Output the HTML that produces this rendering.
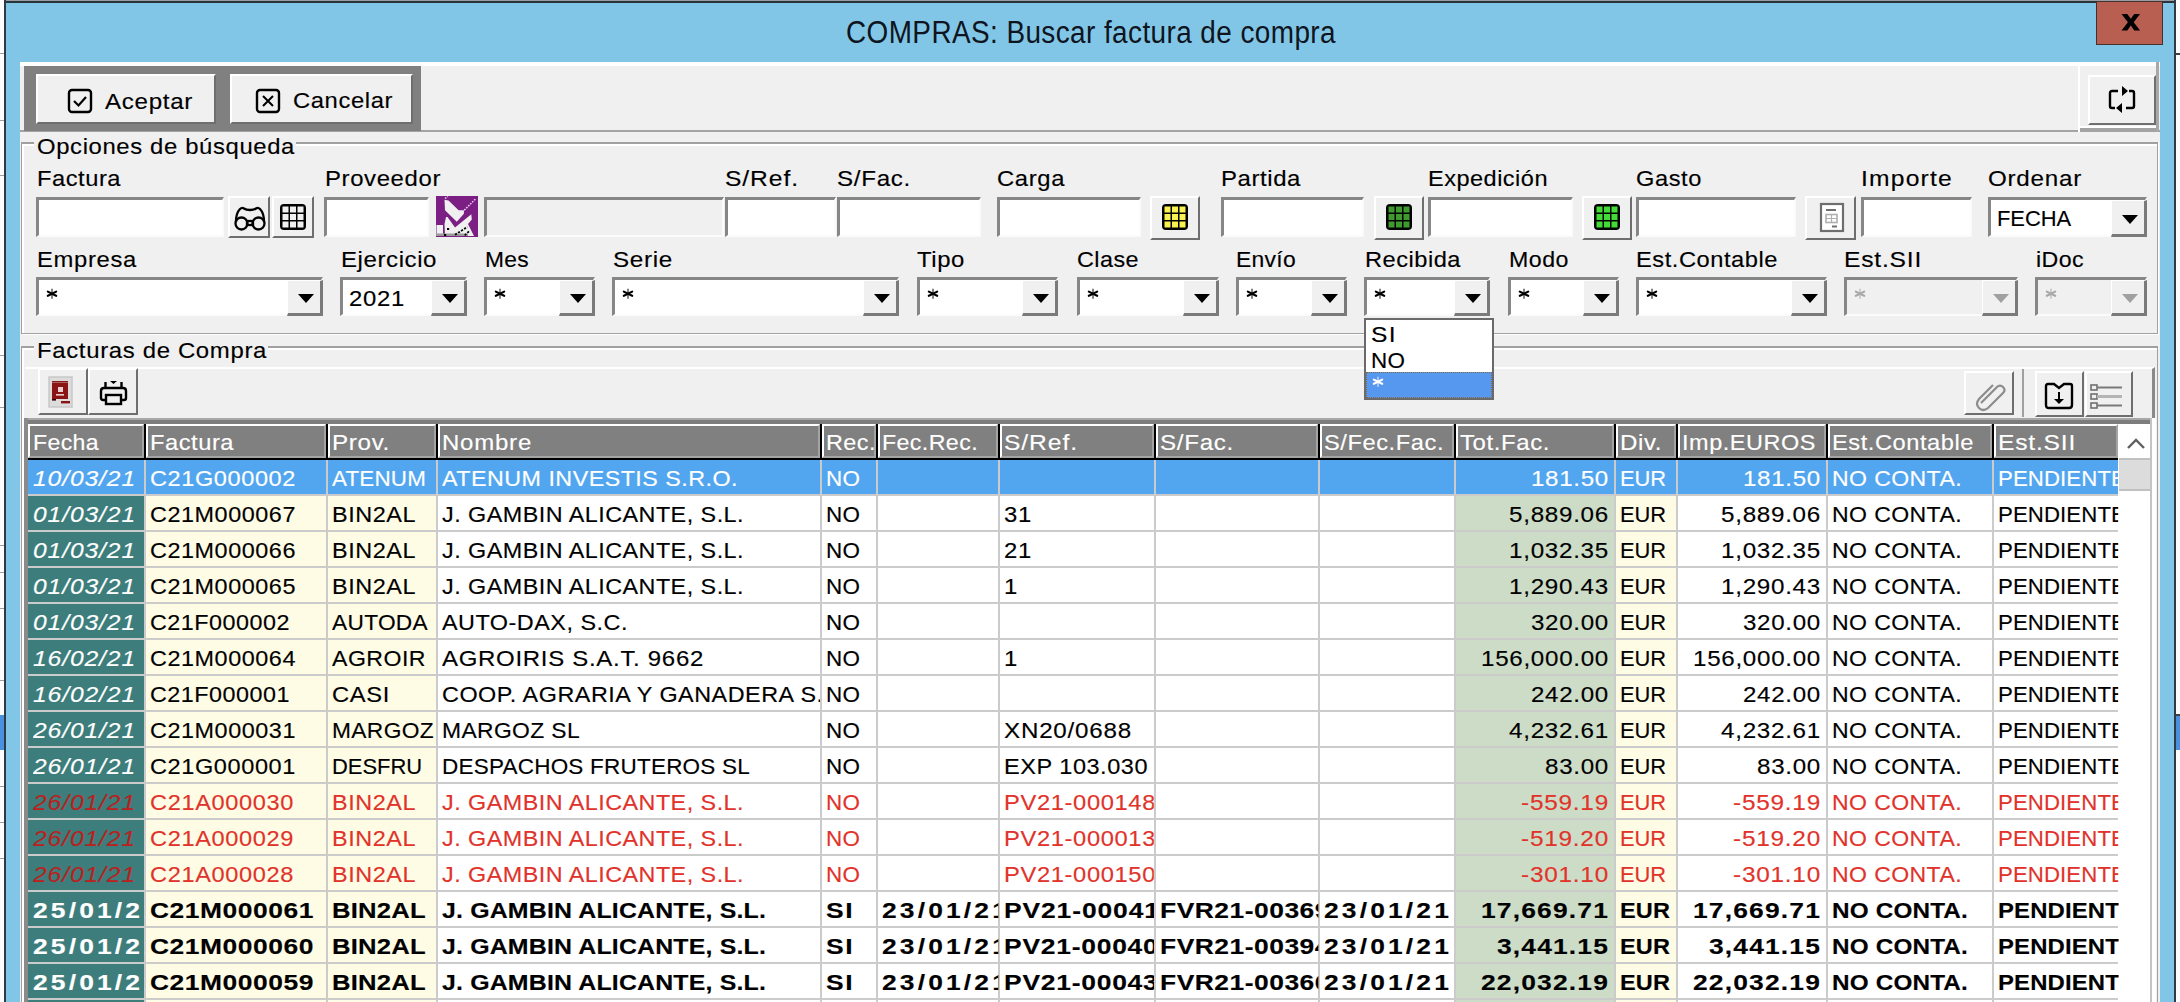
<!DOCTYPE html><html><head><meta charset="utf-8"><style>*{margin:0;padding:0}
html,body{width:2180px;height:1002px;overflow:hidden;background:#f0f0f0}
body{position:relative;font-family:"Liberation Sans",sans-serif}
body>div,body>svg{position:absolute}
.t{white-space:pre;-webkit-text-stroke:0.15px currentColor}
</style></head><body>
<div style="left:0px;top:0px;width:4px;height:1002px;background:#fdfdfd"></div>
<div style="left:2176px;top:0px;width:4px;height:1002px;background:#fdfdfd"></div>
<div style="left:0px;top:53px;width:4px;height:1px;background:#a0a0a0"></div>
<div style="left:0px;top:120px;width:4px;height:1px;background:#a0a0a0"></div>
<div style="left:0px;top:175px;width:4px;height:1px;background:#a0a0a0"></div>
<div style="left:0px;top:355px;width:4px;height:1px;background:#a0a0a0"></div>
<div style="left:0px;top:407px;width:4px;height:1px;background:#a0a0a0"></div>
<div style="left:0px;top:545px;width:4px;height:1px;background:#a0a0a0"></div>
<div style="left:0px;top:572px;width:4px;height:1px;background:#a0a0a0"></div>
<div style="left:0px;top:608px;width:4px;height:1px;background:#a0a0a0"></div>
<div style="left:0px;top:680px;width:4px;height:1px;background:#a0a0a0"></div>
<div style="left:0px;top:786px;width:4px;height:1px;background:#a0a0a0"></div>
<div style="left:0px;top:822px;width:4px;height:1px;background:#a0a0a0"></div>
<div style="left:0px;top:858px;width:4px;height:1px;background:#a0a0a0"></div>
<div style="left:0px;top:715px;width:4px;height:35px;background:#4a90e0"></div>
<div style="left:2176px;top:53px;width:4px;height:2px;background:#404040"></div>
<div style="left:2176px;top:714px;width:4px;height:2px;background:#404040"></div>
<div style="left:2176px;top:716px;width:4px;height:34px;background:#4a90e0"></div>
<div style="left:4px;top:0px;width:2172px;height:1002px;background:#81c6e6"></div>
<div style="left:4px;top:0px;width:2172px;height:1px;background:#9a9ea4"></div>
<div style="left:4px;top:1px;width:2172px;height:2px;background:#27343c"></div>
<div style="left:4px;top:0px;width:2px;height:1002px;background:#2f3b44"></div>
<div style="left:2174px;top:0px;width:2px;height:1002px;background:#2f3b44"></div>
<div style="left:2096px;top:1px;width:67px;height:44px;background:#b95f52;border:1px solid #45302c;box-sizing:border-box"></div>
<svg style="left:2121px;top:14px" width="20" height="17" viewBox="0 0 20 17"><polygon points="0.5,0 6.3,0 9.8,4.8 13.3,0 19.1,0 12.7,8.2 19.1,16.5 13.3,16.5 9.8,11.6 6.3,16.5 0.5,16.5 6.9,8.2" fill="#000"/></svg>
<div class="t" style="left:846.0px;top:17px;font-size:31px;line-height:31px;letter-spacing:0.470px;color:#0e1420;transform:scaleX(0.9000);transform-origin:0 0;-webkit-text-stroke:0;">COMPRAS: Buscar factura de compra</div>
<div style="left:20px;top:62px;width:2140px;height:940px;background:#f0f0f0"></div>
<div style="left:20px;top:62px;width:2140px;height:4px;background:#fff"></div>
<div style="left:2080px;top:126px;width:76px;height:2px;background:#fff"></div>
<div style="left:20px;top:130px;width:2140px;height:2px;background:#a3a3a3"></div>
<div style="left:2078px;top:128px;width:78px;height:2px;background:#a3a3a3"></div>
<div style="left:2156px;top:62px;width:3px;height:70px;background:#a8a8a8"></div>
<div style="left:24px;top:66px;width:397px;height:65px;background:#808080"></div>
<div style="left:36px;top:74px;width:180px;height:50px;background:#f0f0f0;border-top:2px solid #fff;border-left:2px solid #fff;border-bottom:2px solid #6e6e6e;border-right:2px solid #6e6e6e;box-sizing:border-box"></div>
<div style="left:230px;top:74px;width:183px;height:50px;background:#f0f0f0;border-top:2px solid #fff;border-left:2px solid #fff;border-bottom:2px solid #6e6e6e;border-right:2px solid #6e6e6e;box-sizing:border-box"></div>
<svg style="left:67px;top:88px" width="26" height="26" viewBox="0 0 26 26"><rect x="2" y="2" width="22" height="22" rx="3" fill="none" stroke="#000" stroke-width="2.4"/><path d="M7 13 L11.5 17.5 L19 9" fill="none" stroke="#000" stroke-width="2.2"/></svg>
<div class="t" style="left:105.0px;top:91px;font-size:22px;line-height:22px;letter-spacing:0.634px;color:#000;transform:scaleX(1.0963);transform-origin:0 0;">Aceptar</div>
<svg style="left:255px;top:88px" width="26" height="26" viewBox="0 0 26 26"><rect x="2" y="2" width="22" height="22" rx="3" fill="none" stroke="#000" stroke-width="2.4"/><path d="M8 8 L18 18 M18 8 L8 18" fill="none" stroke="#000" stroke-width="2"/></svg>
<div class="t" style="left:293.0px;top:90px;font-size:22px;line-height:22px;letter-spacing:0.553px;color:#000;transform:scaleX(1.0815);transform-origin:0 0;">Cancelar</div>
<div style="left:2078px;top:62px;width:2px;height:70px;background:#fff"></div>
<div style="left:2088px;top:75px;width:68px;height:50px;background:#f0f0f0;border-top:2px solid #fff;border-left:2px solid #fff;border-bottom:2px solid #6e6e6e;border-right:2px solid #6e6e6e;box-sizing:border-box"></div>
<svg style="left:2106px;top:85px" width="32" height="30" viewBox="0 0 32 30"><path d="M12 6 H6 Q4 6 4 8 V21 Q4 23 6 23 H9 M20 23 H26 Q28 23 28 21 V8 Q28 6 26 6 H23" fill="none" stroke="#000" stroke-width="2.4"/><path d="M16 1 L22 6 L16 11 Z M16 18 L10 23 L16 28 Z" fill="#000"/></svg>
<div style="left:21px;top:142px;width:2137px;height:192px;border-top:2px solid #a0a0a0;border-left:1px solid #a0a0a0;border-bottom:1px solid #a0a0a0;border-right:1px solid #a0a0a0;box-shadow:inset 2px 2px 0 #fff, 1px 1px 0 #fff;box-sizing:border-box"></div>
<div style="left:34px;top:136px;width:262px;height:14px;background:#f0f0f0"></div>
<div class="t" style="left:37.0px;top:136px;font-size:22px;line-height:22px;letter-spacing:0.585px;color:#000;transform:scaleX(1.0841);transform-origin:0 0;">Opciones de búsqueda</div>
<div class="t" style="left:37.0px;top:168px;font-size:22px;line-height:22px;letter-spacing:0.500px;color:#000;transform:scaleX(1.0757);transform-origin:0 0;">Factura</div>
<div class="t" style="left:325.0px;top:168px;font-size:22px;line-height:22px;letter-spacing:0.593px;color:#000;transform:scaleX(1.0856);transform-origin:0 0;">Proveedor</div>
<div class="t" style="left:725.0px;top:168px;font-size:22px;line-height:22px;letter-spacing:0.822px;color:#000;transform:scaleX(1.1200);transform-origin:0 0;">S/Ref.</div>
<div class="t" style="left:837.0px;top:168px;font-size:22px;line-height:22px;letter-spacing:0.633px;color:#000;transform:scaleX(1.0984);transform-origin:0 0;">S/Fac.</div>
<div class="t" style="left:997.0px;top:168px;font-size:22px;line-height:22px;letter-spacing:0.598px;color:#000;transform:scaleX(1.0809);transform-origin:0 0;">Carga</div>
<div class="t" style="left:1221.0px;top:168px;font-size:22px;line-height:22px;letter-spacing:0.540px;color:#000;transform:scaleX(1.0885);transform-origin:0 0;">Partida</div>
<div class="t" style="left:1428.0px;top:168px;font-size:22px;line-height:22px;letter-spacing:0.463px;color:#000;transform:scaleX(1.0689);transform-origin:0 0;">Expedición</div>
<div class="t" style="left:1636.0px;top:168px;font-size:22px;line-height:22px;letter-spacing:0.543px;color:#000;transform:scaleX(1.0746);transform-origin:0 0;">Gasto</div>
<div class="t" style="left:1861.0px;top:168px;font-size:22px;line-height:22px;letter-spacing:1.078px;color:#000;transform:scaleX(1.1200);transform-origin:0 0;">Importe</div>
<div class="t" style="left:1988.0px;top:168px;font-size:22px;line-height:22px;letter-spacing:0.691px;color:#000;transform:scaleX(1.0987);transform-origin:0 0;">Ordenar</div>
<div style="left:36px;top:197px;width:188px;height:40px;background:#fff;border-top:3px solid #868686;border-left:3px solid #868686;border-bottom:2px solid #fbfbfb;border-right:2px solid #fbfbfb;box-sizing:border-box"></div>
<div style="left:228px;top:196px;width:42px;height:42px;background:#f0f0f0;border-top:2px solid #fff;border-left:2px solid #fff;border-bottom:2px solid #6e6e6e;border-right:2px solid #6e6e6e;box-sizing:border-box"></div>
<div style="left:272px;top:196px;width:42px;height:42px;background:#f0f0f0;border-top:2px solid #fff;border-left:2px solid #fff;border-bottom:2px solid #6e6e6e;border-right:2px solid #6e6e6e;box-sizing:border-box"></div>
<div style="left:324px;top:197px;width:105px;height:40px;background:#fff;border-top:3px solid #868686;border-left:3px solid #868686;border-bottom:2px solid #fbfbfb;border-right:2px solid #fbfbfb;box-sizing:border-box"></div>
<div style="left:436px;top:196px;width:42px;height:41px;background:#7b1f85"></div>
<div style="left:484px;top:197px;width:240px;height:40px;background:#f0f0f0;border-top:3px solid #868686;border-left:3px solid #868686;border-bottom:2px solid #fbfbfb;border-right:2px solid #fbfbfb;box-sizing:border-box"></div>
<div style="left:725px;top:197px;width:111px;height:40px;background:#fff;border-top:3px solid #868686;border-left:3px solid #868686;border-bottom:2px solid #fbfbfb;border-right:2px solid #fbfbfb;box-sizing:border-box"></div>
<div style="left:837px;top:197px;width:144px;height:40px;background:#fff;border-top:3px solid #868686;border-left:3px solid #868686;border-bottom:2px solid #fbfbfb;border-right:2px solid #fbfbfb;box-sizing:border-box"></div>
<div style="left:997px;top:197px;width:144px;height:40px;background:#fff;border-top:3px solid #868686;border-left:3px solid #868686;border-bottom:2px solid #fbfbfb;border-right:2px solid #fbfbfb;box-sizing:border-box"></div>
<div style="left:1150px;top:196px;width:50px;height:44px;background:#f0f0f0;border-top:2px solid #fff;border-left:2px solid #fff;border-bottom:2px solid #6e6e6e;border-right:2px solid #6e6e6e;box-sizing:border-box"></div>
<div style="left:1221px;top:197px;width:143px;height:40px;background:#fff;border-top:3px solid #868686;border-left:3px solid #868686;border-bottom:2px solid #fbfbfb;border-right:2px solid #fbfbfb;box-sizing:border-box"></div>
<div style="left:1374px;top:196px;width:50px;height:44px;background:#f0f0f0;border-top:2px solid #fff;border-left:2px solid #fff;border-bottom:2px solid #6e6e6e;border-right:2px solid #6e6e6e;box-sizing:border-box"></div>
<div style="left:1428px;top:197px;width:145px;height:40px;background:#fff;border-top:3px solid #868686;border-left:3px solid #868686;border-bottom:2px solid #fbfbfb;border-right:2px solid #fbfbfb;box-sizing:border-box"></div>
<div style="left:1582px;top:196px;width:50px;height:44px;background:#f0f0f0;border-top:2px solid #fff;border-left:2px solid #fff;border-bottom:2px solid #6e6e6e;border-right:2px solid #6e6e6e;box-sizing:border-box"></div>
<div style="left:1636px;top:197px;width:160px;height:40px;background:#fff;border-top:3px solid #868686;border-left:3px solid #868686;border-bottom:2px solid #fbfbfb;border-right:2px solid #fbfbfb;box-sizing:border-box"></div>
<div style="left:1805px;top:196px;width:51px;height:44px;background:#f0f0f0;border-top:2px solid #fff;border-left:2px solid #fff;border-bottom:2px solid #6e6e6e;border-right:2px solid #6e6e6e;box-sizing:border-box"></div>
<div style="left:1861px;top:197px;width:111px;height:40px;background:#fff;border-top:3px solid #868686;border-left:3px solid #868686;border-bottom:2px solid #fbfbfb;border-right:2px solid #fbfbfb;box-sizing:border-box"></div>
<div style="left:1988px;top:197px;width:159px;height:40px;background:#fff;border-top:3px solid #868686;border-left:3px solid #868686;border-bottom:2px solid #fbfbfb;border-right:2px solid #fbfbfb;box-sizing:border-box"></div>
<div style="left:2111px;top:200px;width:36px;height:37px;background:#f0f0f0;border-bottom:3px solid #7a7a7a;border-right:3px solid #7a7a7a;border-top:1px solid #fff;border-left:1px solid #fff;box-sizing:border-box"></div>
<div style="left:2122px;top:215px;width:0;height:0;border-left:8px solid transparent;border-right:8px solid transparent;border-top:9px solid #000"></div>
<div class="t" style="left:1997.0px;top:208px;font-size:22px;line-height:22px;letter-spacing:-0.045px;color:#000;transform:scaleX(0.9955);transform-origin:0 0;">FECHA</div>
<div class="t" style="left:37.0px;top:249px;font-size:22px;line-height:22px;letter-spacing:0.632px;color:#000;transform:scaleX(1.0815);transform-origin:0 0;">Empresa</div>
<div class="t" style="left:341.0px;top:249px;font-size:22px;line-height:22px;letter-spacing:0.523px;color:#000;transform:scaleX(1.0928);transform-origin:0 0;">Ejercicio</div>
<div class="t" style="left:485.0px;top:249px;font-size:22px;line-height:22px;letter-spacing:0.314px;color:#000;transform:scaleX(1.0352);transform-origin:0 0;">Mes</div>
<div class="t" style="left:613.0px;top:249px;font-size:22px;line-height:22px;letter-spacing:0.628px;color:#000;transform:scaleX(1.1009);transform-origin:0 0;">Serie</div>
<div class="t" style="left:917.0px;top:249px;font-size:22px;line-height:22px;letter-spacing:0.554px;color:#000;transform:scaleX(1.0860);transform-origin:0 0;">Tipo</div>
<div class="t" style="left:1077.0px;top:249px;font-size:22px;line-height:22px;letter-spacing:0.433px;color:#000;transform:scaleX(1.0613);transform-origin:0 0;">Clase</div>
<div class="t" style="left:1236.0px;top:249px;font-size:22px;line-height:22px;letter-spacing:0.287px;color:#000;transform:scaleX(1.0398);transform-origin:0 0;">Envío</div>
<div class="t" style="left:1365.0px;top:249px;font-size:22px;line-height:22px;letter-spacing:0.484px;color:#000;transform:scaleX(1.0728);transform-origin:0 0;">Recibida</div>
<div class="t" style="left:1509.0px;top:249px;font-size:22px;line-height:22px;letter-spacing:0.470px;color:#000;transform:scaleX(1.0540);transform-origin:0 0;">Modo</div>
<div class="t" style="left:1636.0px;top:249px;font-size:22px;line-height:22px;letter-spacing:0.496px;color:#000;transform:scaleX(1.0764);transform-origin:0 0;">Est.Contable</div>
<div class="t" style="left:1844.0px;top:249px;font-size:22px;line-height:22px;letter-spacing:0.692px;color:#000;transform:scaleX(1.1200);transform-origin:0 0;">Est.SII</div>
<div class="t" style="left:2036.0px;top:249px;font-size:22px;line-height:22px;letter-spacing:0.378px;color:#000;transform:scaleX(1.0543);transform-origin:0 0;">iDoc</div>
<div style="left:36px;top:277px;width:287px;height:39px;background:#fff;border-top:3px solid #868686;border-left:3px solid #868686;border-bottom:2px solid #fbfbfb;border-right:2px solid #fbfbfb;box-sizing:border-box"></div>
<div style="left:287px;top:280px;width:36px;height:36px;background:#f0f0f0;border-bottom:3px solid #7a7a7a;border-right:3px solid #7a7a7a;border-top:1px solid #fff;border-left:1px solid #fff;box-sizing:border-box"></div>
<div style="left:298px;top:294px;width:0;height:0;border-left:8px solid transparent;border-right:8px solid transparent;border-top:9px solid #000"></div>
<svg style="left:46px;top:288px" width="12" height="12" viewBox="0 0 12 12"><path d="M6 0.8 V10.8" stroke="#000" stroke-width="1.6" opacity="0.6"/><path d="M1.8 3.6 L6 5.8 L10.2 3.6 M1.8 7.8 L6 5.8 L10.2 7.8" fill="none" stroke="#000" stroke-width="2.1" stroke-linecap="round"/></svg>
<div style="left:340px;top:277px;width:127px;height:39px;background:#fff;border-top:3px solid #868686;border-left:3px solid #868686;border-bottom:2px solid #fbfbfb;border-right:2px solid #fbfbfb;box-sizing:border-box"></div>
<div style="left:431px;top:280px;width:36px;height:36px;background:#f0f0f0;border-bottom:3px solid #7a7a7a;border-right:3px solid #7a7a7a;border-top:1px solid #fff;border-left:1px solid #fff;box-sizing:border-box"></div>
<div style="left:442px;top:294px;width:0;height:0;border-left:8px solid transparent;border-right:8px solid transparent;border-top:9px solid #000"></div>
<div class="t" style="left:349.0px;top:288px;font-size:22px;line-height:22px;letter-spacing:0.649px;color:#000;transform:scaleX(1.0864);transform-origin:0 0;">2021</div>
<div style="left:484px;top:277px;width:111px;height:39px;background:#fff;border-top:3px solid #868686;border-left:3px solid #868686;border-bottom:2px solid #fbfbfb;border-right:2px solid #fbfbfb;box-sizing:border-box"></div>
<div style="left:559px;top:280px;width:36px;height:36px;background:#f0f0f0;border-bottom:3px solid #7a7a7a;border-right:3px solid #7a7a7a;border-top:1px solid #fff;border-left:1px solid #fff;box-sizing:border-box"></div>
<div style="left:570px;top:294px;width:0;height:0;border-left:8px solid transparent;border-right:8px solid transparent;border-top:9px solid #000"></div>
<svg style="left:494px;top:288px" width="12" height="12" viewBox="0 0 12 12"><path d="M6 0.8 V10.8" stroke="#000" stroke-width="1.6" opacity="0.6"/><path d="M1.8 3.6 L6 5.8 L10.2 3.6 M1.8 7.8 L6 5.8 L10.2 7.8" fill="none" stroke="#000" stroke-width="2.1" stroke-linecap="round"/></svg>
<div style="left:612px;top:277px;width:287px;height:39px;background:#fff;border-top:3px solid #868686;border-left:3px solid #868686;border-bottom:2px solid #fbfbfb;border-right:2px solid #fbfbfb;box-sizing:border-box"></div>
<div style="left:863px;top:280px;width:36px;height:36px;background:#f0f0f0;border-bottom:3px solid #7a7a7a;border-right:3px solid #7a7a7a;border-top:1px solid #fff;border-left:1px solid #fff;box-sizing:border-box"></div>
<div style="left:874px;top:294px;width:0;height:0;border-left:8px solid transparent;border-right:8px solid transparent;border-top:9px solid #000"></div>
<svg style="left:622px;top:288px" width="12" height="12" viewBox="0 0 12 12"><path d="M6 0.8 V10.8" stroke="#000" stroke-width="1.6" opacity="0.6"/><path d="M1.8 3.6 L6 5.8 L10.2 3.6 M1.8 7.8 L6 5.8 L10.2 7.8" fill="none" stroke="#000" stroke-width="2.1" stroke-linecap="round"/></svg>
<div style="left:917px;top:277px;width:141px;height:39px;background:#fff;border-top:3px solid #868686;border-left:3px solid #868686;border-bottom:2px solid #fbfbfb;border-right:2px solid #fbfbfb;box-sizing:border-box"></div>
<div style="left:1022px;top:280px;width:36px;height:36px;background:#f0f0f0;border-bottom:3px solid #7a7a7a;border-right:3px solid #7a7a7a;border-top:1px solid #fff;border-left:1px solid #fff;box-sizing:border-box"></div>
<div style="left:1033px;top:294px;width:0;height:0;border-left:8px solid transparent;border-right:8px solid transparent;border-top:9px solid #000"></div>
<svg style="left:927px;top:288px" width="12" height="12" viewBox="0 0 12 12"><path d="M6 0.8 V10.8" stroke="#000" stroke-width="1.6" opacity="0.6"/><path d="M1.8 3.6 L6 5.8 L10.2 3.6 M1.8 7.8 L6 5.8 L10.2 7.8" fill="none" stroke="#000" stroke-width="2.1" stroke-linecap="round"/></svg>
<div style="left:1077px;top:277px;width:142px;height:39px;background:#fff;border-top:3px solid #868686;border-left:3px solid #868686;border-bottom:2px solid #fbfbfb;border-right:2px solid #fbfbfb;box-sizing:border-box"></div>
<div style="left:1183px;top:280px;width:36px;height:36px;background:#f0f0f0;border-bottom:3px solid #7a7a7a;border-right:3px solid #7a7a7a;border-top:1px solid #fff;border-left:1px solid #fff;box-sizing:border-box"></div>
<div style="left:1194px;top:294px;width:0;height:0;border-left:8px solid transparent;border-right:8px solid transparent;border-top:9px solid #000"></div>
<svg style="left:1087px;top:288px" width="12" height="12" viewBox="0 0 12 12"><path d="M6 0.8 V10.8" stroke="#000" stroke-width="1.6" opacity="0.6"/><path d="M1.8 3.6 L6 5.8 L10.2 3.6 M1.8 7.8 L6 5.8 L10.2 7.8" fill="none" stroke="#000" stroke-width="2.1" stroke-linecap="round"/></svg>
<div style="left:1236px;top:277px;width:111px;height:39px;background:#fff;border-top:3px solid #868686;border-left:3px solid #868686;border-bottom:2px solid #fbfbfb;border-right:2px solid #fbfbfb;box-sizing:border-box"></div>
<div style="left:1311px;top:280px;width:36px;height:36px;background:#f0f0f0;border-bottom:3px solid #7a7a7a;border-right:3px solid #7a7a7a;border-top:1px solid #fff;border-left:1px solid #fff;box-sizing:border-box"></div>
<div style="left:1322px;top:294px;width:0;height:0;border-left:8px solid transparent;border-right:8px solid transparent;border-top:9px solid #000"></div>
<svg style="left:1246px;top:288px" width="12" height="12" viewBox="0 0 12 12"><path d="M6 0.8 V10.8" stroke="#000" stroke-width="1.6" opacity="0.6"/><path d="M1.8 3.6 L6 5.8 L10.2 3.6 M1.8 7.8 L6 5.8 L10.2 7.8" fill="none" stroke="#000" stroke-width="2.1" stroke-linecap="round"/></svg>
<div style="left:1364px;top:277px;width:126px;height:39px;background:#fff;border-top:3px solid #868686;border-left:3px solid #868686;border-bottom:2px solid #fbfbfb;border-right:2px solid #fbfbfb;box-sizing:border-box"></div>
<div style="left:1454px;top:280px;width:36px;height:36px;background:#f0f0f0;border-bottom:3px solid #7a7a7a;border-right:3px solid #7a7a7a;border-top:1px solid #fff;border-left:1px solid #fff;box-sizing:border-box"></div>
<div style="left:1465px;top:294px;width:0;height:0;border-left:8px solid transparent;border-right:8px solid transparent;border-top:9px solid #000"></div>
<svg style="left:1374px;top:288px" width="12" height="12" viewBox="0 0 12 12"><path d="M6 0.8 V10.8" stroke="#000" stroke-width="1.6" opacity="0.6"/><path d="M1.8 3.6 L6 5.8 L10.2 3.6 M1.8 7.8 L6 5.8 L10.2 7.8" fill="none" stroke="#000" stroke-width="2.1" stroke-linecap="round"/></svg>
<div style="left:1508px;top:277px;width:111px;height:39px;background:#fff;border-top:3px solid #868686;border-left:3px solid #868686;border-bottom:2px solid #fbfbfb;border-right:2px solid #fbfbfb;box-sizing:border-box"></div>
<div style="left:1583px;top:280px;width:36px;height:36px;background:#f0f0f0;border-bottom:3px solid #7a7a7a;border-right:3px solid #7a7a7a;border-top:1px solid #fff;border-left:1px solid #fff;box-sizing:border-box"></div>
<div style="left:1594px;top:294px;width:0;height:0;border-left:8px solid transparent;border-right:8px solid transparent;border-top:9px solid #000"></div>
<svg style="left:1518px;top:288px" width="12" height="12" viewBox="0 0 12 12"><path d="M6 0.8 V10.8" stroke="#000" stroke-width="1.6" opacity="0.6"/><path d="M1.8 3.6 L6 5.8 L10.2 3.6 M1.8 7.8 L6 5.8 L10.2 7.8" fill="none" stroke="#000" stroke-width="2.1" stroke-linecap="round"/></svg>
<div style="left:1636px;top:277px;width:191px;height:39px;background:#fff;border-top:3px solid #868686;border-left:3px solid #868686;border-bottom:2px solid #fbfbfb;border-right:2px solid #fbfbfb;box-sizing:border-box"></div>
<div style="left:1791px;top:280px;width:36px;height:36px;background:#f0f0f0;border-bottom:3px solid #7a7a7a;border-right:3px solid #7a7a7a;border-top:1px solid #fff;border-left:1px solid #fff;box-sizing:border-box"></div>
<div style="left:1802px;top:294px;width:0;height:0;border-left:8px solid transparent;border-right:8px solid transparent;border-top:9px solid #000"></div>
<svg style="left:1646px;top:288px" width="12" height="12" viewBox="0 0 12 12"><path d="M6 0.8 V10.8" stroke="#000" stroke-width="1.6" opacity="0.6"/><path d="M1.8 3.6 L6 5.8 L10.2 3.6 M1.8 7.8 L6 5.8 L10.2 7.8" fill="none" stroke="#000" stroke-width="2.1" stroke-linecap="round"/></svg>
<div style="left:1844px;top:277px;width:174px;height:39px;background:#f0f0f0;border-top:3px solid #868686;border-left:3px solid #868686;border-bottom:2px solid #fbfbfb;border-right:2px solid #fbfbfb;box-sizing:border-box"></div>
<div style="left:1982px;top:280px;width:36px;height:36px;background:#f0f0f0;border-bottom:3px solid #7a7a7a;border-right:3px solid #7a7a7a;border-top:1px solid #fff;border-left:1px solid #fff;box-sizing:border-box"></div>
<div style="left:1993px;top:294px;width:0;height:0;border-left:8px solid transparent;border-right:8px solid transparent;border-top:9px solid #a0a0a0"></div>
<svg style="left:1854px;top:288px" width="12" height="12" viewBox="0 0 12 12"><path d="M6 0.8 V10.8" stroke="#a8a8a8" stroke-width="1.6" opacity="0.6"/><path d="M1.8 3.6 L6 5.8 L10.2 3.6 M1.8 7.8 L6 5.8 L10.2 7.8" fill="none" stroke="#a8a8a8" stroke-width="2.1" stroke-linecap="round"/></svg>
<div style="left:2035px;top:277px;width:112px;height:39px;background:#f0f0f0;border-top:3px solid #868686;border-left:3px solid #868686;border-bottom:2px solid #fbfbfb;border-right:2px solid #fbfbfb;box-sizing:border-box"></div>
<div style="left:2111px;top:280px;width:36px;height:36px;background:#f0f0f0;border-bottom:3px solid #7a7a7a;border-right:3px solid #7a7a7a;border-top:1px solid #fff;border-left:1px solid #fff;box-sizing:border-box"></div>
<div style="left:2122px;top:294px;width:0;height:0;border-left:8px solid transparent;border-right:8px solid transparent;border-top:9px solid #a0a0a0"></div>
<svg style="left:2045px;top:288px" width="12" height="12" viewBox="0 0 12 12"><path d="M6 0.8 V10.8" stroke="#a8a8a8" stroke-width="1.6" opacity="0.6"/><path d="M1.8 3.6 L6 5.8 L10.2 3.6 M1.8 7.8 L6 5.8 L10.2 7.8" fill="none" stroke="#a8a8a8" stroke-width="2.1" stroke-linecap="round"/></svg>
<div style="left:21px;top:346px;width:2137px;height:700px;border-top:2px solid #a0a0a0;border-left:1px solid #a0a0a0;border-right:1px solid #a0a0a0;box-shadow:inset 2px 2px 0 #fff;box-sizing:border-box"></div>
<div style="left:34px;top:340px;width:234px;height:14px;background:#f0f0f0"></div>
<div class="t" style="left:37.0px;top:340px;font-size:22px;line-height:22px;letter-spacing:0.602px;color:#000;transform:scaleX(1.0882);transform-origin:0 0;">Facturas de Compra</div>
<div style="left:25px;top:367px;width:2130px;height:52px;background:#f0f0f0;border-top:2px solid #fff;border-right:3px solid #8a8a8a;box-sizing:border-box"></div>
<div style="left:38px;top:368px;width:50px;height:47px;background:#f0f0f0;border-top:2px solid #fff;border-left:2px solid #fff;border-bottom:2px solid #6e6e6e;border-right:2px solid #6e6e6e;box-sizing:border-box"></div>
<div style="left:88px;top:368px;width:50px;height:47px;background:#f0f0f0;border-top:2px solid #fff;border-left:2px solid #fff;border-bottom:2px solid #6e6e6e;border-right:2px solid #6e6e6e;box-sizing:border-box"></div>
<div style="left:1964px;top:371px;width:50px;height:44px;background:#f0f0f0;border-top:2px solid #fff;border-left:2px solid #fff;border-bottom:2px solid #6e6e6e;border-right:2px solid #6e6e6e;box-sizing:border-box"></div>
<div style="left:2022px;top:369px;width:2px;height:48px;background:#a0a0a0"></div>
<div style="left:2035px;top:371px;width:49px;height:46px;background:#f0f0f0;border-top:2px solid #fff;border-left:2px solid #fff;border-bottom:2px solid #6e6e6e;border-right:2px solid #6e6e6e;box-sizing:border-box"></div>
<div style="left:2085px;top:371px;width:48px;height:46px;background:#f0f0f0;border-top:2px solid #fff;border-left:2px solid #fff;border-bottom:2px solid #6e6e6e;border-right:2px solid #6e6e6e;box-sizing:border-box"></div>
<div style="left:24px;top:418px;width:2131px;height:6px;background:#7d7d7d;border-top:2px solid #a8a8a8;box-sizing:border-box"></div>
<div style="left:24px;top:418px;width:4px;height:584px;background:#8a8a8a"></div>
<div style="left:28px;top:424px;width:2090px;height:36px;background:#000"></div>
<div style="left:28px;top:424px;width:116px;height:34px;background:#808080;border-top:2px solid #fff;border-left:2px solid #fff;border-bottom:2px solid #a4a4a4;border-right:2px solid #a4a4a4;box-sizing:border-box"></div>
<div class="t" style="left:33.0px;top:432px;font-size:22px;line-height:22px;letter-spacing:0.370px;color:#fff;width:106.0px;overflow:hidden;transform:scaleX(1.0475);transform-origin:0 0;">Fecha</div>
<div style="left:146px;top:424px;width:180px;height:34px;background:#808080;border-top:2px solid #fff;border-left:2px solid #fff;border-bottom:2px solid #a4a4a4;border-right:2px solid #a4a4a4;box-sizing:border-box"></div>
<div class="t" style="left:150.0px;top:432px;font-size:22px;line-height:22px;letter-spacing:0.500px;color:#fff;width:162.7px;overflow:hidden;transform:scaleX(1.0757);transform-origin:0 0;">Factura</div>
<div style="left:328px;top:424px;width:108px;height:34px;background:#808080;border-top:2px solid #fff;border-left:2px solid #fff;border-bottom:2px solid #a4a4a4;border-right:2px solid #a4a4a4;box-sizing:border-box"></div>
<div class="t" style="left:332.0px;top:432px;font-size:22px;line-height:22px;letter-spacing:0.602px;color:#fff;width:93.6px;overflow:hidden;transform:scaleX(1.0999);transform-origin:0 0;">Prov.</div>
<div style="left:438px;top:424px;width:382px;height:34px;background:#808080;border-top:2px solid #fff;border-left:2px solid #fff;border-bottom:2px solid #a4a4a4;border-right:2px solid #a4a4a4;box-sizing:border-box"></div>
<div class="t" style="left:442.0px;top:432px;font-size:22px;line-height:22px;letter-spacing:0.719px;color:#fff;width:345.8px;overflow:hidden;transform:scaleX(1.0901);transform-origin:0 0;">Nombre</div>
<div style="left:822px;top:424px;width:54px;height:34px;background:#808080;border-top:2px solid #fff;border-left:2px solid #fff;border-bottom:2px solid #a4a4a4;border-right:2px solid #a4a4a4;box-sizing:border-box"></div>
<div class="t" style="left:826.0px;top:432px;font-size:22px;line-height:22px;letter-spacing:0.447px;color:#fff;width:46.1px;overflow:hidden;transform:scaleX(1.0630);transform-origin:0 0;">Rec.</div>
<div style="left:878px;top:424px;width:120px;height:34px;background:#808080;border-top:2px solid #fff;border-left:2px solid #fff;border-bottom:2px solid #a4a4a4;border-right:2px solid #a4a4a4;box-sizing:border-box"></div>
<div class="t" style="left:882.0px;top:432px;font-size:22px;line-height:22px;letter-spacing:0.378px;color:#fff;width:109.1px;overflow:hidden;transform:scaleX(1.0543);transform-origin:0 0;">Fec.Rec.</div>
<div style="left:1000px;top:424px;width:154px;height:34px;background:#808080;border-top:2px solid #fff;border-left:2px solid #fff;border-bottom:2px solid #a4a4a4;border-right:2px solid #a4a4a4;box-sizing:border-box"></div>
<div class="t" style="left:1004.0px;top:432px;font-size:22px;line-height:22px;letter-spacing:0.822px;color:#fff;width:133.0px;overflow:hidden;transform:scaleX(1.1200);transform-origin:0 0;">S/Ref.</div>
<div style="left:1156px;top:424px;width:162px;height:34px;background:#808080;border-top:2px solid #fff;border-left:2px solid #fff;border-bottom:2px solid #a4a4a4;border-right:2px solid #a4a4a4;box-sizing:border-box"></div>
<div class="t" style="left:1160.0px;top:432px;font-size:22px;line-height:22px;letter-spacing:0.633px;color:#fff;width:142.9px;overflow:hidden;transform:scaleX(1.0984);transform-origin:0 0;">S/Fac.</div>
<div style="left:1320px;top:424px;width:134px;height:34px;background:#808080;border-top:2px solid #fff;border-left:2px solid #fff;border-bottom:2px solid #a4a4a4;border-right:2px solid #a4a4a4;box-sizing:border-box"></div>
<div class="t" style="left:1324.0px;top:432px;font-size:22px;line-height:22px;letter-spacing:0.507px;color:#fff;width:119.8px;overflow:hidden;transform:scaleX(1.0770);transform-origin:0 0;">S/Fec.Fac.</div>
<div style="left:1456px;top:424px;width:158px;height:34px;background:#808080;border-top:2px solid #fff;border-left:2px solid #fff;border-bottom:2px solid #a4a4a4;border-right:2px solid #a4a4a4;box-sizing:border-box"></div>
<div class="t" style="left:1460.0px;top:432px;font-size:22px;line-height:22px;letter-spacing:0.539px;color:#fff;width:140.4px;overflow:hidden;transform:scaleX(1.0901);transform-origin:0 0;">Tot.Fac.</div>
<div style="left:1616px;top:424px;width:60px;height:34px;background:#808080;border-top:2px solid #fff;border-left:2px solid #fff;border-bottom:2px solid #a4a4a4;border-right:2px solid #a4a4a4;box-sizing:border-box"></div>
<div class="t" style="left:1620.0px;top:432px;font-size:22px;line-height:22px;letter-spacing:0.524px;color:#fff;width:50.2px;overflow:hidden;transform:scaleX(1.0949);transform-origin:0 0;">Div.</div>
<div style="left:1678px;top:424px;width:148px;height:34px;background:#808080;border-top:2px solid #fff;border-left:2px solid #fff;border-bottom:2px solid #a4a4a4;border-right:2px solid #a4a4a4;box-sizing:border-box"></div>
<div class="t" style="left:1682.0px;top:432px;font-size:22px;line-height:22px;letter-spacing:0.542px;color:#fff;width:134.4px;overflow:hidden;transform:scaleX(1.0643);transform-origin:0 0;">Imp.EUROS</div>
<div style="left:1828px;top:424px;width:164px;height:34px;background:#808080;border-top:2px solid #fff;border-left:2px solid #fff;border-bottom:2px solid #a4a4a4;border-right:2px solid #a4a4a4;box-sizing:border-box"></div>
<div class="t" style="left:1832.0px;top:432px;font-size:22px;line-height:22px;letter-spacing:0.496px;color:#fff;width:147.7px;overflow:hidden;transform:scaleX(1.0764);transform-origin:0 0;">Est.Contable</div>
<div style="left:1994px;top:424px;width:124px;height:34px;background:#808080;border-top:2px solid #fff;border-left:2px solid #fff;border-bottom:2px solid #a4a4a4;border-right:2px solid #a4a4a4;box-sizing:border-box"></div>
<div class="t" style="left:1998.0px;top:432px;font-size:22px;line-height:22px;letter-spacing:0.692px;color:#fff;width:106.2px;overflow:hidden;transform:scaleX(1.1200);transform-origin:0 0;">Est.SII</div>
<div style="left:2118px;top:424px;width:33px;height:578px;background:#fff"></div>
<div style="left:2119px;top:458px;width:32px;height:33px;background:#dcdcdc;border-top:2px solid #c0c0c0;border-bottom:2px solid #c0c0c0;box-sizing:border-box"></div>
<svg style="left:2125px;top:435px" width="22" height="18" viewBox="0 0 22 18"><path d="M3 13 L11 5 L19 13" fill="none" stroke="#606060" stroke-width="2.4"/></svg>
<div style="left:2150px;top:418px;width:2px;height:584px;background:#c4c4c4"></div>
<div style="left:2152px;top:418px;width:4px;height:584px;background:#fff"></div>
<div style="left:28px;top:460px;width:2090px;height:542px;background:#cbcbcb"></div>
<div style="left:28px;top:460px;width:116px;height:34px;background:#52a6ef"></div>
<div class="t" style="left:33.0px;top:468px;font-size:22px;line-height:22px;letter-spacing:0.790px;color:#fff;font-style:italic;width:99.1px;overflow:hidden;transform:scaleX(1.1200);transform-origin:0 0;">10/03/21</div>
<div style="left:146px;top:460px;width:180px;height:34px;background:#52a6ef"></div>
<div class="t" style="left:150.0px;top:468px;font-size:22px;line-height:22px;letter-spacing:0.565px;color:#fff;width:164.6px;overflow:hidden;transform:scaleX(1.0693);transform-origin:0 0;">C21G000002</div>
<div style="left:328px;top:460px;width:108px;height:34px;background:#52a6ef"></div>
<div class="t" style="left:332.0px;top:468px;font-size:22px;line-height:22px;letter-spacing:0.179px;color:#fff;width:102.2px;overflow:hidden;transform:scaleX(1.0180);transform-origin:0 0;">ATENUM</div>
<div style="left:438px;top:460px;width:382px;height:34px;background:#52a6ef"></div>
<div class="t" style="left:442.0px;top:468px;font-size:22px;line-height:22px;letter-spacing:0.451px;color:#fff;width:357.1px;overflow:hidden;transform:scaleX(1.0584);transform-origin:0 0;">ATENUM INVESTIS S.R.O.</div>
<div style="left:822px;top:460px;width:54px;height:34px;background:#52a6ef"></div>
<div class="t" style="left:826.0px;top:468px;font-size:22px;line-height:22px;letter-spacing:0.196px;color:#fff;width:49.1px;overflow:hidden;transform:scaleX(1.0182);transform-origin:0 0;">NO</div>
<div style="left:878px;top:460px;width:120px;height:34px;background:#52a6ef"></div>
<div style="left:1000px;top:460px;width:154px;height:34px;background:#52a6ef"></div>
<div style="left:1156px;top:460px;width:162px;height:34px;background:#52a6ef"></div>
<div style="left:1320px;top:460px;width:134px;height:34px;background:#52a6ef"></div>
<div style="left:1456px;top:460px;width:158px;height:34px;background:#52a6ef"></div>
<div class="t" style="left:1531.0px;top:468px;font-size:22px;line-height:22px;letter-spacing:0.651px;color:#fff;transform:scaleX(1.0954);transform-origin:0 0;">181.50</div>
<div style="left:1616px;top:460px;width:60px;height:34px;background:#52a6ef"></div>
<div class="t" style="left:1620.0px;top:468px;font-size:22px;line-height:22px;letter-spacing:-0.061px;color:#fff;width:56.3px;overflow:hidden;transform:scaleX(0.9941);transform-origin:0 0;">EUR</div>
<div style="left:1678px;top:460px;width:148px;height:34px;background:#52a6ef"></div>
<div class="t" style="left:1743.0px;top:468px;font-size:22px;line-height:22px;letter-spacing:0.651px;color:#fff;transform:scaleX(1.0954);transform-origin:0 0;">181.50</div>
<div style="left:1828px;top:460px;width:164px;height:34px;background:#52a6ef"></div>
<div class="t" style="left:1832.0px;top:468px;font-size:22px;line-height:22px;letter-spacing:0.399px;color:#fff;width:152.8px;overflow:hidden;transform:scaleX(1.0468);transform-origin:0 0;">NO CONTA.</div>
<div style="left:1994px;top:460px;width:124px;height:34px;background:#52a6ef"></div>
<div class="t" style="left:1998.0px;top:468px;font-size:22px;line-height:22px;letter-spacing:0.091px;color:#fff;width:118.8px;overflow:hidden;transform:scaleX(1.0099);transform-origin:0 0;">PENDIENTE</div>
<div style="left:28px;top:496px;width:116px;height:34px;background:#3d7e7c"></div>
<div class="t" style="left:33.0px;top:504px;font-size:22px;line-height:22px;letter-spacing:0.790px;color:#fff;font-style:italic;width:99.1px;overflow:hidden;transform:scaleX(1.1200);transform-origin:0 0;">01/03/21</div>
<div style="left:146px;top:496px;width:180px;height:34px;background:#fffce6"></div>
<div class="t" style="left:150.0px;top:504px;font-size:22px;line-height:22px;letter-spacing:0.523px;color:#000;width:165.6px;overflow:hidden;transform:scaleX(1.0631);transform-origin:0 0;">C21M000067</div>
<div style="left:328px;top:496px;width:108px;height:34px;background:#fffce6"></div>
<div class="t" style="left:332.0px;top:504px;font-size:22px;line-height:22px;letter-spacing:0.512px;color:#000;width:97.7px;overflow:hidden;transform:scaleX(1.0647);transform-origin:0 0;">BIN2AL</div>
<div style="left:438px;top:496px;width:382px;height:34px;background:#fff"></div>
<div class="t" style="left:442.0px;top:504px;font-size:22px;line-height:22px;letter-spacing:0.442px;color:#000;width:356.0px;overflow:hidden;transform:scaleX(1.0617);transform-origin:0 0;">J. GAMBIN ALICANTE, S.L.</div>
<div style="left:822px;top:496px;width:54px;height:34px;background:#fff"></div>
<div class="t" style="left:826.0px;top:504px;font-size:22px;line-height:22px;letter-spacing:0.196px;color:#000;width:49.1px;overflow:hidden;transform:scaleX(1.0182);transform-origin:0 0;">NO</div>
<div style="left:878px;top:496px;width:120px;height:34px;background:#fff"></div>
<div style="left:1000px;top:496px;width:154px;height:34px;background:#fff"></div>
<div class="t" style="left:1004.0px;top:504px;font-size:22px;line-height:22px;letter-spacing:0.647px;color:#000;width:138.1px;overflow:hidden;transform:scaleX(1.0862);transform-origin:0 0;">31</div>
<div style="left:1156px;top:496px;width:162px;height:34px;background:#fff"></div>
<div style="left:1320px;top:496px;width:134px;height:34px;background:#fff"></div>
<div style="left:1456px;top:496px;width:158px;height:34px;background:#ccdcc6"></div>
<div class="t" style="left:1509.0px;top:504px;font-size:22px;line-height:22px;letter-spacing:0.652px;color:#000;transform:scaleX(1.1006);transform-origin:0 0;">5,889.06</div>
<div style="left:1616px;top:496px;width:60px;height:34px;background:#fffce6"></div>
<div class="t" style="left:1620.0px;top:504px;font-size:22px;line-height:22px;letter-spacing:-0.061px;color:#000;width:56.3px;overflow:hidden;transform:scaleX(0.9941);transform-origin:0 0;">EUR</div>
<div style="left:1678px;top:496px;width:148px;height:34px;background:#fff"></div>
<div class="t" style="left:1721.0px;top:504px;font-size:22px;line-height:22px;letter-spacing:0.652px;color:#000;transform:scaleX(1.1006);transform-origin:0 0;">5,889.06</div>
<div style="left:1828px;top:496px;width:164px;height:34px;background:#fff"></div>
<div class="t" style="left:1832.0px;top:504px;font-size:22px;line-height:22px;letter-spacing:0.399px;color:#000;width:152.8px;overflow:hidden;transform:scaleX(1.0468);transform-origin:0 0;">NO CONTA.</div>
<div style="left:1994px;top:496px;width:124px;height:34px;background:#fff"></div>
<div class="t" style="left:1998.0px;top:504px;font-size:22px;line-height:22px;letter-spacing:0.091px;color:#000;width:118.8px;overflow:hidden;transform:scaleX(1.0099);transform-origin:0 0;">PENDIENTE</div>
<div style="left:28px;top:532px;width:116px;height:34px;background:#3d7e7c"></div>
<div class="t" style="left:33.0px;top:540px;font-size:22px;line-height:22px;letter-spacing:0.790px;color:#fff;font-style:italic;width:99.1px;overflow:hidden;transform:scaleX(1.1200);transform-origin:0 0;">01/03/21</div>
<div style="left:146px;top:532px;width:180px;height:34px;background:#fffce6"></div>
<div class="t" style="left:150.0px;top:540px;font-size:22px;line-height:22px;letter-spacing:0.523px;color:#000;width:165.6px;overflow:hidden;transform:scaleX(1.0631);transform-origin:0 0;">C21M000066</div>
<div style="left:328px;top:532px;width:108px;height:34px;background:#fffce6"></div>
<div class="t" style="left:332.0px;top:540px;font-size:22px;line-height:22px;letter-spacing:0.512px;color:#000;width:97.7px;overflow:hidden;transform:scaleX(1.0647);transform-origin:0 0;">BIN2AL</div>
<div style="left:438px;top:532px;width:382px;height:34px;background:#fff"></div>
<div class="t" style="left:442.0px;top:540px;font-size:22px;line-height:22px;letter-spacing:0.442px;color:#000;width:356.0px;overflow:hidden;transform:scaleX(1.0617);transform-origin:0 0;">J. GAMBIN ALICANTE, S.L.</div>
<div style="left:822px;top:532px;width:54px;height:34px;background:#fff"></div>
<div class="t" style="left:826.0px;top:540px;font-size:22px;line-height:22px;letter-spacing:0.196px;color:#000;width:49.1px;overflow:hidden;transform:scaleX(1.0182);transform-origin:0 0;">NO</div>
<div style="left:878px;top:532px;width:120px;height:34px;background:#fff"></div>
<div style="left:1000px;top:532px;width:154px;height:34px;background:#fff"></div>
<div class="t" style="left:1004.0px;top:540px;font-size:22px;line-height:22px;letter-spacing:0.647px;color:#000;width:138.1px;overflow:hidden;transform:scaleX(1.0862);transform-origin:0 0;">21</div>
<div style="left:1156px;top:532px;width:162px;height:34px;background:#fff"></div>
<div style="left:1320px;top:532px;width:134px;height:34px;background:#fff"></div>
<div style="left:1456px;top:532px;width:158px;height:34px;background:#ccdcc6"></div>
<div class="t" style="left:1509.0px;top:540px;font-size:22px;line-height:22px;letter-spacing:0.652px;color:#000;transform:scaleX(1.1006);transform-origin:0 0;">1,032.35</div>
<div style="left:1616px;top:532px;width:60px;height:34px;background:#fffce6"></div>
<div class="t" style="left:1620.0px;top:540px;font-size:22px;line-height:22px;letter-spacing:-0.061px;color:#000;width:56.3px;overflow:hidden;transform:scaleX(0.9941);transform-origin:0 0;">EUR</div>
<div style="left:1678px;top:532px;width:148px;height:34px;background:#fff"></div>
<div class="t" style="left:1721.0px;top:540px;font-size:22px;line-height:22px;letter-spacing:0.652px;color:#000;transform:scaleX(1.1006);transform-origin:0 0;">1,032.35</div>
<div style="left:1828px;top:532px;width:164px;height:34px;background:#fff"></div>
<div class="t" style="left:1832.0px;top:540px;font-size:22px;line-height:22px;letter-spacing:0.399px;color:#000;width:152.8px;overflow:hidden;transform:scaleX(1.0468);transform-origin:0 0;">NO CONTA.</div>
<div style="left:1994px;top:532px;width:124px;height:34px;background:#fff"></div>
<div class="t" style="left:1998.0px;top:540px;font-size:22px;line-height:22px;letter-spacing:0.091px;color:#000;width:118.8px;overflow:hidden;transform:scaleX(1.0099);transform-origin:0 0;">PENDIENTE</div>
<div style="left:28px;top:568px;width:116px;height:34px;background:#3d7e7c"></div>
<div class="t" style="left:33.0px;top:576px;font-size:22px;line-height:22px;letter-spacing:0.790px;color:#fff;font-style:italic;width:99.1px;overflow:hidden;transform:scaleX(1.1200);transform-origin:0 0;">01/03/21</div>
<div style="left:146px;top:568px;width:180px;height:34px;background:#fffce6"></div>
<div class="t" style="left:150.0px;top:576px;font-size:22px;line-height:22px;letter-spacing:0.523px;color:#000;width:165.6px;overflow:hidden;transform:scaleX(1.0631);transform-origin:0 0;">C21M000065</div>
<div style="left:328px;top:568px;width:108px;height:34px;background:#fffce6"></div>
<div class="t" style="left:332.0px;top:576px;font-size:22px;line-height:22px;letter-spacing:0.512px;color:#000;width:97.7px;overflow:hidden;transform:scaleX(1.0647);transform-origin:0 0;">BIN2AL</div>
<div style="left:438px;top:568px;width:382px;height:34px;background:#fff"></div>
<div class="t" style="left:442.0px;top:576px;font-size:22px;line-height:22px;letter-spacing:0.442px;color:#000;width:356.0px;overflow:hidden;transform:scaleX(1.0617);transform-origin:0 0;">J. GAMBIN ALICANTE, S.L.</div>
<div style="left:822px;top:568px;width:54px;height:34px;background:#fff"></div>
<div class="t" style="left:826.0px;top:576px;font-size:22px;line-height:22px;letter-spacing:0.196px;color:#000;width:49.1px;overflow:hidden;transform:scaleX(1.0182);transform-origin:0 0;">NO</div>
<div style="left:878px;top:568px;width:120px;height:34px;background:#fff"></div>
<div style="left:1000px;top:568px;width:154px;height:34px;background:#fff"></div>
<div class="t" style="left:1004.0px;top:576px;font-size:22px;line-height:22px;letter-spacing:0.645px;color:#000;width:138.2px;overflow:hidden;transform:scaleX(1.0857);transform-origin:0 0;">1</div>
<div style="left:1156px;top:568px;width:162px;height:34px;background:#fff"></div>
<div style="left:1320px;top:568px;width:134px;height:34px;background:#fff"></div>
<div style="left:1456px;top:568px;width:158px;height:34px;background:#ccdcc6"></div>
<div class="t" style="left:1509.0px;top:576px;font-size:22px;line-height:22px;letter-spacing:0.652px;color:#000;transform:scaleX(1.1006);transform-origin:0 0;">1,290.43</div>
<div style="left:1616px;top:568px;width:60px;height:34px;background:#fffce6"></div>
<div class="t" style="left:1620.0px;top:576px;font-size:22px;line-height:22px;letter-spacing:-0.061px;color:#000;width:56.3px;overflow:hidden;transform:scaleX(0.9941);transform-origin:0 0;">EUR</div>
<div style="left:1678px;top:568px;width:148px;height:34px;background:#fff"></div>
<div class="t" style="left:1721.0px;top:576px;font-size:22px;line-height:22px;letter-spacing:0.652px;color:#000;transform:scaleX(1.1006);transform-origin:0 0;">1,290.43</div>
<div style="left:1828px;top:568px;width:164px;height:34px;background:#fff"></div>
<div class="t" style="left:1832.0px;top:576px;font-size:22px;line-height:22px;letter-spacing:0.399px;color:#000;width:152.8px;overflow:hidden;transform:scaleX(1.0468);transform-origin:0 0;">NO CONTA.</div>
<div style="left:1994px;top:568px;width:124px;height:34px;background:#fff"></div>
<div class="t" style="left:1998.0px;top:576px;font-size:22px;line-height:22px;letter-spacing:0.091px;color:#000;width:118.8px;overflow:hidden;transform:scaleX(1.0099);transform-origin:0 0;">PENDIENTE</div>
<div style="left:28px;top:604px;width:116px;height:34px;background:#3d7e7c"></div>
<div class="t" style="left:33.0px;top:612px;font-size:22px;line-height:22px;letter-spacing:0.790px;color:#fff;font-style:italic;width:99.1px;overflow:hidden;transform:scaleX(1.1200);transform-origin:0 0;">01/03/21</div>
<div style="left:146px;top:604px;width:180px;height:34px;background:#fffce6"></div>
<div class="t" style="left:150.0px;top:612px;font-size:22px;line-height:22px;letter-spacing:0.482px;color:#000;width:166.0px;overflow:hidden;transform:scaleX(1.0603);transform-origin:0 0;">C21F000002</div>
<div style="left:328px;top:604px;width:108px;height:34px;background:#fffce6"></div>
<div class="t" style="left:332.0px;top:612px;font-size:22px;line-height:22px;letter-spacing:0.305px;color:#000;width:100.9px;overflow:hidden;transform:scaleX(1.0310);transform-origin:0 0;">AUTODA</div>
<div style="left:438px;top:604px;width:382px;height:34px;background:#fff"></div>
<div class="t" style="left:442.0px;top:612px;font-size:22px;line-height:22px;letter-spacing:0.476px;color:#000;width:355.6px;overflow:hidden;transform:scaleX(1.0631);transform-origin:0 0;">AUTO-DAX, S.C.</div>
<div style="left:822px;top:604px;width:54px;height:34px;background:#fff"></div>
<div class="t" style="left:826.0px;top:612px;font-size:22px;line-height:22px;letter-spacing:0.196px;color:#000;width:49.1px;overflow:hidden;transform:scaleX(1.0182);transform-origin:0 0;">NO</div>
<div style="left:878px;top:604px;width:120px;height:34px;background:#fff"></div>
<div style="left:1000px;top:604px;width:154px;height:34px;background:#fff"></div>
<div style="left:1156px;top:604px;width:162px;height:34px;background:#fff"></div>
<div style="left:1320px;top:604px;width:134px;height:34px;background:#fff"></div>
<div style="left:1456px;top:604px;width:158px;height:34px;background:#ccdcc6"></div>
<div class="t" style="left:1531.0px;top:612px;font-size:22px;line-height:22px;letter-spacing:0.651px;color:#000;transform:scaleX(1.0954);transform-origin:0 0;">320.00</div>
<div style="left:1616px;top:604px;width:60px;height:34px;background:#fffce6"></div>
<div class="t" style="left:1620.0px;top:612px;font-size:22px;line-height:22px;letter-spacing:-0.061px;color:#000;width:56.3px;overflow:hidden;transform:scaleX(0.9941);transform-origin:0 0;">EUR</div>
<div style="left:1678px;top:604px;width:148px;height:34px;background:#fff"></div>
<div class="t" style="left:1743.0px;top:612px;font-size:22px;line-height:22px;letter-spacing:0.651px;color:#000;transform:scaleX(1.0954);transform-origin:0 0;">320.00</div>
<div style="left:1828px;top:604px;width:164px;height:34px;background:#fff"></div>
<div class="t" style="left:1832.0px;top:612px;font-size:22px;line-height:22px;letter-spacing:0.399px;color:#000;width:152.8px;overflow:hidden;transform:scaleX(1.0468);transform-origin:0 0;">NO CONTA.</div>
<div style="left:1994px;top:604px;width:124px;height:34px;background:#fff"></div>
<div class="t" style="left:1998.0px;top:612px;font-size:22px;line-height:22px;letter-spacing:0.091px;color:#000;width:118.8px;overflow:hidden;transform:scaleX(1.0099);transform-origin:0 0;">PENDIENTE</div>
<div style="left:28px;top:640px;width:116px;height:34px;background:#3d7e7c"></div>
<div class="t" style="left:33.0px;top:648px;font-size:22px;line-height:22px;letter-spacing:0.790px;color:#fff;font-style:italic;width:99.1px;overflow:hidden;transform:scaleX(1.1200);transform-origin:0 0;">16/02/21</div>
<div style="left:146px;top:640px;width:180px;height:34px;background:#fffce6"></div>
<div class="t" style="left:150.0px;top:648px;font-size:22px;line-height:22px;letter-spacing:0.523px;color:#000;width:165.6px;overflow:hidden;transform:scaleX(1.0631);transform-origin:0 0;">C21M000064</div>
<div style="left:328px;top:640px;width:108px;height:34px;background:#fffce6"></div>
<div class="t" style="left:332.0px;top:648px;font-size:22px;line-height:22px;letter-spacing:0.457px;color:#000;width:99.1px;overflow:hidden;transform:scaleX(1.0498);transform-origin:0 0;">AGROIR</div>
<div style="left:438px;top:640px;width:382px;height:34px;background:#fff"></div>
<div class="t" style="left:442.0px;top:648px;font-size:22px;line-height:22px;letter-spacing:0.633px;color:#000;width:346.4px;overflow:hidden;transform:scaleX(1.0912);transform-origin:0 0;">AGROIRIS S.A.T. 9662</div>
<div style="left:822px;top:640px;width:54px;height:34px;background:#fff"></div>
<div class="t" style="left:826.0px;top:648px;font-size:22px;line-height:22px;letter-spacing:0.196px;color:#000;width:49.1px;overflow:hidden;transform:scaleX(1.0182);transform-origin:0 0;">NO</div>
<div style="left:878px;top:640px;width:120px;height:34px;background:#fff"></div>
<div style="left:1000px;top:640px;width:154px;height:34px;background:#fff"></div>
<div class="t" style="left:1004.0px;top:648px;font-size:22px;line-height:22px;letter-spacing:0.645px;color:#000;width:138.2px;overflow:hidden;transform:scaleX(1.0857);transform-origin:0 0;">1</div>
<div style="left:1156px;top:640px;width:162px;height:34px;background:#fff"></div>
<div style="left:1320px;top:640px;width:134px;height:34px;background:#fff"></div>
<div style="left:1456px;top:640px;width:158px;height:34px;background:#ccdcc6"></div>
<div class="t" style="left:1481.0px;top:648px;font-size:22px;line-height:22px;letter-spacing:0.652px;color:#000;transform:scaleX(1.0975);transform-origin:0 0;">156,000.00</div>
<div style="left:1616px;top:640px;width:60px;height:34px;background:#fffce6"></div>
<div class="t" style="left:1620.0px;top:648px;font-size:22px;line-height:22px;letter-spacing:-0.061px;color:#000;width:56.3px;overflow:hidden;transform:scaleX(0.9941);transform-origin:0 0;">EUR</div>
<div style="left:1678px;top:640px;width:148px;height:34px;background:#fff"></div>
<div class="t" style="left:1693.0px;top:648px;font-size:22px;line-height:22px;letter-spacing:0.652px;color:#000;transform:scaleX(1.0975);transform-origin:0 0;">156,000.00</div>
<div style="left:1828px;top:640px;width:164px;height:34px;background:#fff"></div>
<div class="t" style="left:1832.0px;top:648px;font-size:22px;line-height:22px;letter-spacing:0.399px;color:#000;width:152.8px;overflow:hidden;transform:scaleX(1.0468);transform-origin:0 0;">NO CONTA.</div>
<div style="left:1994px;top:640px;width:124px;height:34px;background:#fff"></div>
<div class="t" style="left:1998.0px;top:648px;font-size:22px;line-height:22px;letter-spacing:0.091px;color:#000;width:118.8px;overflow:hidden;transform:scaleX(1.0099);transform-origin:0 0;">PENDIENTE</div>
<div style="left:28px;top:676px;width:116px;height:34px;background:#3d7e7c"></div>
<div class="t" style="left:33.0px;top:684px;font-size:22px;line-height:22px;letter-spacing:0.790px;color:#fff;font-style:italic;width:99.1px;overflow:hidden;transform:scaleX(1.1200);transform-origin:0 0;">16/02/21</div>
<div style="left:146px;top:676px;width:180px;height:34px;background:#fffce6"></div>
<div class="t" style="left:150.0px;top:684px;font-size:22px;line-height:22px;letter-spacing:0.482px;color:#000;width:166.0px;overflow:hidden;transform:scaleX(1.0603);transform-origin:0 0;">C21F000001</div>
<div style="left:328px;top:676px;width:108px;height:34px;background:#fffce6"></div>
<div class="t" style="left:332.0px;top:684px;font-size:22px;line-height:22px;letter-spacing:0.616px;color:#000;width:96.5px;overflow:hidden;transform:scaleX(1.0776);transform-origin:0 0;">CASI</div>
<div style="left:438px;top:676px;width:382px;height:34px;background:#fff"></div>
<div class="t" style="left:442.0px;top:684px;font-size:22px;line-height:22px;letter-spacing:0.489px;color:#000;width:355.9px;overflow:hidden;transform:scaleX(1.0620);transform-origin:0 0;">COOP. AGRARIA Y GANADERA S.L.</div>
<div style="left:822px;top:676px;width:54px;height:34px;background:#fff"></div>
<div class="t" style="left:826.0px;top:684px;font-size:22px;line-height:22px;letter-spacing:0.196px;color:#000;width:49.1px;overflow:hidden;transform:scaleX(1.0182);transform-origin:0 0;">NO</div>
<div style="left:878px;top:676px;width:120px;height:34px;background:#fff"></div>
<div style="left:1000px;top:676px;width:154px;height:34px;background:#fff"></div>
<div style="left:1156px;top:676px;width:162px;height:34px;background:#fff"></div>
<div style="left:1320px;top:676px;width:134px;height:34px;background:#fff"></div>
<div style="left:1456px;top:676px;width:158px;height:34px;background:#ccdcc6"></div>
<div class="t" style="left:1531.0px;top:684px;font-size:22px;line-height:22px;letter-spacing:0.651px;color:#000;transform:scaleX(1.0954);transform-origin:0 0;">242.00</div>
<div style="left:1616px;top:676px;width:60px;height:34px;background:#fffce6"></div>
<div class="t" style="left:1620.0px;top:684px;font-size:22px;line-height:22px;letter-spacing:-0.061px;color:#000;width:56.3px;overflow:hidden;transform:scaleX(0.9941);transform-origin:0 0;">EUR</div>
<div style="left:1678px;top:676px;width:148px;height:34px;background:#fff"></div>
<div class="t" style="left:1743.0px;top:684px;font-size:22px;line-height:22px;letter-spacing:0.651px;color:#000;transform:scaleX(1.0954);transform-origin:0 0;">242.00</div>
<div style="left:1828px;top:676px;width:164px;height:34px;background:#fff"></div>
<div class="t" style="left:1832.0px;top:684px;font-size:22px;line-height:22px;letter-spacing:0.399px;color:#000;width:152.8px;overflow:hidden;transform:scaleX(1.0468);transform-origin:0 0;">NO CONTA.</div>
<div style="left:1994px;top:676px;width:124px;height:34px;background:#fff"></div>
<div class="t" style="left:1998.0px;top:684px;font-size:22px;line-height:22px;letter-spacing:0.091px;color:#000;width:118.8px;overflow:hidden;transform:scaleX(1.0099);transform-origin:0 0;">PENDIENTE</div>
<div style="left:28px;top:712px;width:116px;height:34px;background:#3d7e7c"></div>
<div class="t" style="left:33.0px;top:720px;font-size:22px;line-height:22px;letter-spacing:0.790px;color:#fff;font-style:italic;width:99.1px;overflow:hidden;transform:scaleX(1.1200);transform-origin:0 0;">26/01/21</div>
<div style="left:146px;top:712px;width:180px;height:34px;background:#fffce6"></div>
<div class="t" style="left:150.0px;top:720px;font-size:22px;line-height:22px;letter-spacing:0.523px;color:#000;width:165.6px;overflow:hidden;transform:scaleX(1.0631);transform-origin:0 0;">C21M000031</div>
<div style="left:328px;top:712px;width:108px;height:34px;background:#fffce6"></div>
<div class="t" style="left:332.0px;top:720px;font-size:22px;line-height:22px;letter-spacing:0.351px;color:#000;width:100.6px;overflow:hidden;transform:scaleX(1.0338);transform-origin:0 0;">MARGOZ</div>
<div style="left:438px;top:712px;width:382px;height:34px;background:#fff"></div>
<div class="t" style="left:442.0px;top:720px;font-size:22px;line-height:22px;letter-spacing:0.360px;color:#000;width:363.8px;overflow:hidden;transform:scaleX(1.0390);transform-origin:0 0;">MARGOZ SL</div>
<div style="left:822px;top:712px;width:54px;height:34px;background:#fff"></div>
<div class="t" style="left:826.0px;top:720px;font-size:22px;line-height:22px;letter-spacing:0.196px;color:#000;width:49.1px;overflow:hidden;transform:scaleX(1.0182);transform-origin:0 0;">NO</div>
<div style="left:878px;top:712px;width:120px;height:34px;background:#fff"></div>
<div style="left:1000px;top:712px;width:154px;height:34px;background:#fff"></div>
<div class="t" style="left:1004.0px;top:720px;font-size:22px;line-height:22px;letter-spacing:0.725px;color:#000;width:136.7px;overflow:hidden;transform:scaleX(1.0976);transform-origin:0 0;">XN20/0688</div>
<div style="left:1156px;top:712px;width:162px;height:34px;background:#fff"></div>
<div style="left:1320px;top:712px;width:134px;height:34px;background:#fff"></div>
<div style="left:1456px;top:712px;width:158px;height:34px;background:#ccdcc6"></div>
<div class="t" style="left:1509.0px;top:720px;font-size:22px;line-height:22px;letter-spacing:0.652px;color:#000;transform:scaleX(1.1006);transform-origin:0 0;">4,232.61</div>
<div style="left:1616px;top:712px;width:60px;height:34px;background:#fffce6"></div>
<div class="t" style="left:1620.0px;top:720px;font-size:22px;line-height:22px;letter-spacing:-0.061px;color:#000;width:56.3px;overflow:hidden;transform:scaleX(0.9941);transform-origin:0 0;">EUR</div>
<div style="left:1678px;top:712px;width:148px;height:34px;background:#fff"></div>
<div class="t" style="left:1721.0px;top:720px;font-size:22px;line-height:22px;letter-spacing:0.652px;color:#000;transform:scaleX(1.1006);transform-origin:0 0;">4,232.61</div>
<div style="left:1828px;top:712px;width:164px;height:34px;background:#fff"></div>
<div class="t" style="left:1832.0px;top:720px;font-size:22px;line-height:22px;letter-spacing:0.399px;color:#000;width:152.8px;overflow:hidden;transform:scaleX(1.0468);transform-origin:0 0;">NO CONTA.</div>
<div style="left:1994px;top:712px;width:124px;height:34px;background:#fff"></div>
<div class="t" style="left:1998.0px;top:720px;font-size:22px;line-height:22px;letter-spacing:0.091px;color:#000;width:118.8px;overflow:hidden;transform:scaleX(1.0099);transform-origin:0 0;">PENDIENTE</div>
<div style="left:28px;top:748px;width:116px;height:34px;background:#3d7e7c"></div>
<div class="t" style="left:33.0px;top:756px;font-size:22px;line-height:22px;letter-spacing:0.790px;color:#fff;font-style:italic;width:99.1px;overflow:hidden;transform:scaleX(1.1200);transform-origin:0 0;">26/01/21</div>
<div style="left:146px;top:748px;width:180px;height:34px;background:#fffce6"></div>
<div class="t" style="left:150.0px;top:756px;font-size:22px;line-height:22px;letter-spacing:0.565px;color:#000;width:164.6px;overflow:hidden;transform:scaleX(1.0693);transform-origin:0 0;">C21G000001</div>
<div style="left:328px;top:748px;width:108px;height:34px;background:#fffce6"></div>
<div class="t" style="left:332.0px;top:756px;font-size:22px;line-height:22px;letter-spacing:-0.030px;color:#000;width:104.3px;overflow:hidden;transform:scaleX(0.9970);transform-origin:0 0;">DESFRU</div>
<div style="left:438px;top:748px;width:382px;height:34px;background:#fff"></div>
<div class="t" style="left:442.0px;top:756px;font-size:22px;line-height:22px;letter-spacing:0.211px;color:#000;width:369.5px;overflow:hidden;transform:scaleX(1.0229);transform-origin:0 0;">DESPACHOS FRUTEROS SL</div>
<div style="left:822px;top:748px;width:54px;height:34px;background:#fff"></div>
<div class="t" style="left:826.0px;top:756px;font-size:22px;line-height:22px;letter-spacing:0.196px;color:#000;width:49.1px;overflow:hidden;transform:scaleX(1.0182);transform-origin:0 0;">NO</div>
<div style="left:878px;top:748px;width:120px;height:34px;background:#fff"></div>
<div style="left:1000px;top:748px;width:154px;height:34px;background:#fff"></div>
<div class="t" style="left:1004.0px;top:756px;font-size:22px;line-height:22px;letter-spacing:0.501px;color:#000;width:140.4px;overflow:hidden;transform:scaleX(1.0684);transform-origin:0 0;">EXP 103.030</div>
<div style="left:1156px;top:748px;width:162px;height:34px;background:#fff"></div>
<div style="left:1320px;top:748px;width:134px;height:34px;background:#fff"></div>
<div style="left:1456px;top:748px;width:158px;height:34px;background:#ccdcc6"></div>
<div class="t" style="left:1545.0px;top:756px;font-size:22px;line-height:22px;letter-spacing:0.652px;color:#000;transform:scaleX(1.0974);transform-origin:0 0;">83.00</div>
<div style="left:1616px;top:748px;width:60px;height:34px;background:#fffce6"></div>
<div class="t" style="left:1620.0px;top:756px;font-size:22px;line-height:22px;letter-spacing:-0.061px;color:#000;width:56.3px;overflow:hidden;transform:scaleX(0.9941);transform-origin:0 0;">EUR</div>
<div style="left:1678px;top:748px;width:148px;height:34px;background:#fff"></div>
<div class="t" style="left:1757.0px;top:756px;font-size:22px;line-height:22px;letter-spacing:0.652px;color:#000;transform:scaleX(1.0974);transform-origin:0 0;">83.00</div>
<div style="left:1828px;top:748px;width:164px;height:34px;background:#fff"></div>
<div class="t" style="left:1832.0px;top:756px;font-size:22px;line-height:22px;letter-spacing:0.399px;color:#000;width:152.8px;overflow:hidden;transform:scaleX(1.0468);transform-origin:0 0;">NO CONTA.</div>
<div style="left:1994px;top:748px;width:124px;height:34px;background:#fff"></div>
<div class="t" style="left:1998.0px;top:756px;font-size:22px;line-height:22px;letter-spacing:0.091px;color:#000;width:118.8px;overflow:hidden;transform:scaleX(1.0099);transform-origin:0 0;">PENDIENTE</div>
<div style="left:28px;top:784px;width:116px;height:34px;background:#3d7e7c"></div>
<div class="t" style="left:33.0px;top:792px;font-size:22px;line-height:22px;letter-spacing:0.790px;color:#b8221e;font-style:italic;width:99.1px;overflow:hidden;transform:scaleX(1.1200);transform-origin:0 0;">26/01/21</div>
<div style="left:146px;top:784px;width:180px;height:34px;background:#fffce6"></div>
<div class="t" style="left:150.0px;top:792px;font-size:22px;line-height:22px;letter-spacing:0.580px;color:#e1332b;width:164.1px;overflow:hidden;transform:scaleX(1.0726);transform-origin:0 0;">C21A000030</div>
<div style="left:328px;top:784px;width:108px;height:34px;background:#fffce6"></div>
<div class="t" style="left:332.0px;top:792px;font-size:22px;line-height:22px;letter-spacing:0.512px;color:#e1332b;width:97.7px;overflow:hidden;transform:scaleX(1.0647);transform-origin:0 0;">BIN2AL</div>
<div style="left:438px;top:784px;width:382px;height:34px;background:#fff"></div>
<div class="t" style="left:442.0px;top:792px;font-size:22px;line-height:22px;letter-spacing:0.442px;color:#e1332b;width:356.0px;overflow:hidden;transform:scaleX(1.0617);transform-origin:0 0;">J. GAMBIN ALICANTE, S.L.</div>
<div style="left:822px;top:784px;width:54px;height:34px;background:#fff"></div>
<div class="t" style="left:826.0px;top:792px;font-size:22px;line-height:22px;letter-spacing:0.196px;color:#e1332b;width:49.1px;overflow:hidden;transform:scaleX(1.0182);transform-origin:0 0;">NO</div>
<div style="left:878px;top:784px;width:120px;height:34px;background:#fff"></div>
<div style="left:1000px;top:784px;width:154px;height:34px;background:#fff"></div>
<div class="t" style="left:1004.0px;top:792px;font-size:22px;line-height:22px;letter-spacing:0.588px;color:#e1332b;width:139.2px;overflow:hidden;transform:scaleX(1.0778);transform-origin:0 0;">PV21-000148</div>
<div style="left:1156px;top:784px;width:162px;height:34px;background:#fff"></div>
<div style="left:1320px;top:784px;width:134px;height:34px;background:#fff"></div>
<div style="left:1456px;top:784px;width:158px;height:34px;background:#ccdcc6"></div>
<div class="t" style="left:1521.0px;top:792px;font-size:22px;line-height:22px;letter-spacing:0.690px;color:#e1332b;transform:scaleX(1.1075);transform-origin:0 0;">-559.19</div>
<div style="left:1616px;top:784px;width:60px;height:34px;background:#fffce6"></div>
<div class="t" style="left:1620.0px;top:792px;font-size:22px;line-height:22px;letter-spacing:-0.061px;color:#e1332b;width:56.3px;overflow:hidden;transform:scaleX(0.9941);transform-origin:0 0;">EUR</div>
<div style="left:1678px;top:784px;width:148px;height:34px;background:#fff"></div>
<div class="t" style="left:1733.0px;top:792px;font-size:22px;line-height:22px;letter-spacing:0.690px;color:#e1332b;transform:scaleX(1.1075);transform-origin:0 0;">-559.19</div>
<div style="left:1828px;top:784px;width:164px;height:34px;background:#fff"></div>
<div class="t" style="left:1832.0px;top:792px;font-size:22px;line-height:22px;letter-spacing:0.399px;color:#e1332b;width:152.8px;overflow:hidden;transform:scaleX(1.0468);transform-origin:0 0;">NO CONTA.</div>
<div style="left:1994px;top:784px;width:124px;height:34px;background:#fff"></div>
<div class="t" style="left:1998.0px;top:792px;font-size:22px;line-height:22px;letter-spacing:0.091px;color:#e1332b;width:118.8px;overflow:hidden;transform:scaleX(1.0099);transform-origin:0 0;">PENDIENTE</div>
<div style="left:28px;top:820px;width:116px;height:34px;background:#3d7e7c"></div>
<div class="t" style="left:33.0px;top:828px;font-size:22px;line-height:22px;letter-spacing:0.790px;color:#b8221e;font-style:italic;width:99.1px;overflow:hidden;transform:scaleX(1.1200);transform-origin:0 0;">26/01/21</div>
<div style="left:146px;top:820px;width:180px;height:34px;background:#fffce6"></div>
<div class="t" style="left:150.0px;top:828px;font-size:22px;line-height:22px;letter-spacing:0.580px;color:#e1332b;width:164.1px;overflow:hidden;transform:scaleX(1.0726);transform-origin:0 0;">C21A000029</div>
<div style="left:328px;top:820px;width:108px;height:34px;background:#fffce6"></div>
<div class="t" style="left:332.0px;top:828px;font-size:22px;line-height:22px;letter-spacing:0.512px;color:#e1332b;width:97.7px;overflow:hidden;transform:scaleX(1.0647);transform-origin:0 0;">BIN2AL</div>
<div style="left:438px;top:820px;width:382px;height:34px;background:#fff"></div>
<div class="t" style="left:442.0px;top:828px;font-size:22px;line-height:22px;letter-spacing:0.442px;color:#e1332b;width:356.0px;overflow:hidden;transform:scaleX(1.0617);transform-origin:0 0;">J. GAMBIN ALICANTE, S.L.</div>
<div style="left:822px;top:820px;width:54px;height:34px;background:#fff"></div>
<div class="t" style="left:826.0px;top:828px;font-size:22px;line-height:22px;letter-spacing:0.196px;color:#e1332b;width:49.1px;overflow:hidden;transform:scaleX(1.0182);transform-origin:0 0;">NO</div>
<div style="left:878px;top:820px;width:120px;height:34px;background:#fff"></div>
<div style="left:1000px;top:820px;width:154px;height:34px;background:#fff"></div>
<div class="t" style="left:1004.0px;top:828px;font-size:22px;line-height:22px;letter-spacing:0.588px;color:#e1332b;width:139.2px;overflow:hidden;transform:scaleX(1.0778);transform-origin:0 0;">PV21-000013</div>
<div style="left:1156px;top:820px;width:162px;height:34px;background:#fff"></div>
<div style="left:1320px;top:820px;width:134px;height:34px;background:#fff"></div>
<div style="left:1456px;top:820px;width:158px;height:34px;background:#ccdcc6"></div>
<div class="t" style="left:1521.0px;top:828px;font-size:22px;line-height:22px;letter-spacing:0.690px;color:#e1332b;transform:scaleX(1.1075);transform-origin:0 0;">-519.20</div>
<div style="left:1616px;top:820px;width:60px;height:34px;background:#fffce6"></div>
<div class="t" style="left:1620.0px;top:828px;font-size:22px;line-height:22px;letter-spacing:-0.061px;color:#e1332b;width:56.3px;overflow:hidden;transform:scaleX(0.9941);transform-origin:0 0;">EUR</div>
<div style="left:1678px;top:820px;width:148px;height:34px;background:#fff"></div>
<div class="t" style="left:1733.0px;top:828px;font-size:22px;line-height:22px;letter-spacing:0.690px;color:#e1332b;transform:scaleX(1.1075);transform-origin:0 0;">-519.20</div>
<div style="left:1828px;top:820px;width:164px;height:34px;background:#fff"></div>
<div class="t" style="left:1832.0px;top:828px;font-size:22px;line-height:22px;letter-spacing:0.399px;color:#e1332b;width:152.8px;overflow:hidden;transform:scaleX(1.0468);transform-origin:0 0;">NO CONTA.</div>
<div style="left:1994px;top:820px;width:124px;height:34px;background:#fff"></div>
<div class="t" style="left:1998.0px;top:828px;font-size:22px;line-height:22px;letter-spacing:0.091px;color:#e1332b;width:118.8px;overflow:hidden;transform:scaleX(1.0099);transform-origin:0 0;">PENDIENTE</div>
<div style="left:28px;top:856px;width:116px;height:34px;background:#3d7e7c"></div>
<div class="t" style="left:33.0px;top:864px;font-size:22px;line-height:22px;letter-spacing:0.790px;color:#b8221e;font-style:italic;width:99.1px;overflow:hidden;transform:scaleX(1.1200);transform-origin:0 0;">26/01/21</div>
<div style="left:146px;top:856px;width:180px;height:34px;background:#fffce6"></div>
<div class="t" style="left:150.0px;top:864px;font-size:22px;line-height:22px;letter-spacing:0.580px;color:#e1332b;width:164.1px;overflow:hidden;transform:scaleX(1.0726);transform-origin:0 0;">C21A000028</div>
<div style="left:328px;top:856px;width:108px;height:34px;background:#fffce6"></div>
<div class="t" style="left:332.0px;top:864px;font-size:22px;line-height:22px;letter-spacing:0.512px;color:#e1332b;width:97.7px;overflow:hidden;transform:scaleX(1.0647);transform-origin:0 0;">BIN2AL</div>
<div style="left:438px;top:856px;width:382px;height:34px;background:#fff"></div>
<div class="t" style="left:442.0px;top:864px;font-size:22px;line-height:22px;letter-spacing:0.442px;color:#e1332b;width:356.0px;overflow:hidden;transform:scaleX(1.0617);transform-origin:0 0;">J. GAMBIN ALICANTE, S.L.</div>
<div style="left:822px;top:856px;width:54px;height:34px;background:#fff"></div>
<div class="t" style="left:826.0px;top:864px;font-size:22px;line-height:22px;letter-spacing:0.196px;color:#e1332b;width:49.1px;overflow:hidden;transform:scaleX(1.0182);transform-origin:0 0;">NO</div>
<div style="left:878px;top:856px;width:120px;height:34px;background:#fff"></div>
<div style="left:1000px;top:856px;width:154px;height:34px;background:#fff"></div>
<div class="t" style="left:1004.0px;top:864px;font-size:22px;line-height:22px;letter-spacing:0.588px;color:#e1332b;width:139.2px;overflow:hidden;transform:scaleX(1.0778);transform-origin:0 0;">PV21-000150</div>
<div style="left:1156px;top:856px;width:162px;height:34px;background:#fff"></div>
<div style="left:1320px;top:856px;width:134px;height:34px;background:#fff"></div>
<div style="left:1456px;top:856px;width:158px;height:34px;background:#ccdcc6"></div>
<div class="t" style="left:1521.0px;top:864px;font-size:22px;line-height:22px;letter-spacing:0.690px;color:#e1332b;transform:scaleX(1.1075);transform-origin:0 0;">-301.10</div>
<div style="left:1616px;top:856px;width:60px;height:34px;background:#fffce6"></div>
<div class="t" style="left:1620.0px;top:864px;font-size:22px;line-height:22px;letter-spacing:-0.061px;color:#e1332b;width:56.3px;overflow:hidden;transform:scaleX(0.9941);transform-origin:0 0;">EUR</div>
<div style="left:1678px;top:856px;width:148px;height:34px;background:#fff"></div>
<div class="t" style="left:1733.0px;top:864px;font-size:22px;line-height:22px;letter-spacing:0.690px;color:#e1332b;transform:scaleX(1.1075);transform-origin:0 0;">-301.10</div>
<div style="left:1828px;top:856px;width:164px;height:34px;background:#fff"></div>
<div class="t" style="left:1832.0px;top:864px;font-size:22px;line-height:22px;letter-spacing:0.399px;color:#e1332b;width:152.8px;overflow:hidden;transform:scaleX(1.0468);transform-origin:0 0;">NO CONTA.</div>
<div style="left:1994px;top:856px;width:124px;height:34px;background:#fff"></div>
<div class="t" style="left:1998.0px;top:864px;font-size:22px;line-height:22px;letter-spacing:0.091px;color:#e1332b;width:118.8px;overflow:hidden;transform:scaleX(1.0099);transform-origin:0 0;">PENDIENTE</div>
<div style="left:28px;top:892px;width:116px;height:34px;background:#3d7e7c"></div>
<div class="t" style="left:33.0px;top:900px;font-size:22px;line-height:22px;letter-spacing:2.628px;color:#fff;font-weight:700;width:92.5px;overflow:hidden;transform:scaleX(1.2000);transform-origin:0 0;">25/01/21</div>
<div style="left:146px;top:892px;width:180px;height:34px;background:#fffce6"></div>
<div class="t" style="left:150.0px;top:900px;font-size:22px;line-height:22px;letter-spacing:0.456px;color:#000;font-weight:700;width:146.7px;overflow:hidden;transform:scaleX(1.2000);transform-origin:0 0;">C21M000061</div>
<div style="left:328px;top:892px;width:108px;height:34px;background:#fffce6"></div>
<div class="t" style="left:332.0px;top:900px;font-size:22px;line-height:22px;letter-spacing:0.208px;color:#000;font-weight:700;width:89.3px;overflow:hidden;transform:scaleX(1.1648);transform-origin:0 0;">BIN2AL</div>
<div style="left:438px;top:892px;width:382px;height:34px;background:#fff"></div>
<div class="t" style="left:442.0px;top:900px;font-size:22px;line-height:22px;letter-spacing:0.152px;color:#000;font-weight:700;width:334.1px;overflow:hidden;transform:scaleX(1.1313);transform-origin:0 0;">J. GAMBIN ALICANTE, S.L.</div>
<div style="left:822px;top:892px;width:54px;height:34px;background:#fff"></div>
<div class="t" style="left:826.0px;top:900px;font-size:22px;line-height:22px;letter-spacing:1.268px;color:#000;font-weight:700;width:41.7px;overflow:hidden;transform:scaleX(1.2000);transform-origin:0 0;">SI</div>
<div style="left:878px;top:892px;width:120px;height:34px;background:#fff"></div>
<div class="t" style="left:882.0px;top:900px;font-size:22px;line-height:22px;letter-spacing:2.628px;color:#000;font-weight:700;width:96.7px;overflow:hidden;transform:scaleX(1.2000);transform-origin:0 0;">23/01/21</div>
<div style="left:1000px;top:892px;width:154px;height:34px;background:#fff"></div>
<div class="t" style="left:1004.0px;top:900px;font-size:22px;line-height:22px;letter-spacing:0.757px;color:#000;font-weight:700;width:125.0px;overflow:hidden;transform:scaleX(1.2000);transform-origin:0 0;">PV21-000411</div>
<div style="left:1156px;top:892px;width:162px;height:34px;background:#fff"></div>
<div class="t" style="left:1160.0px;top:900px;font-size:22px;line-height:22px;letter-spacing:0.426px;color:#000;font-weight:700;width:131.7px;overflow:hidden;transform:scaleX(1.2000);transform-origin:0 0;">FVR21-00369</div>
<div style="left:1320px;top:892px;width:134px;height:34px;background:#fff"></div>
<div class="t" style="left:1324.0px;top:900px;font-size:22px;line-height:22px;letter-spacing:2.628px;color:#000;font-weight:700;width:108.3px;overflow:hidden;transform:scaleX(1.2000);transform-origin:0 0;">23/01/21</div>
<div style="left:1456px;top:892px;width:158px;height:34px;background:#ccdcc6"></div>
<div class="t" style="left:1481.0px;top:900px;font-size:22px;line-height:22px;letter-spacing:0.977px;color:#000;font-weight:700;transform:scaleX(1.2000);transform-origin:0 0;">17,669.71</div>
<div style="left:1616px;top:892px;width:60px;height:34px;background:#fffce6"></div>
<div class="t" style="left:1620.0px;top:900px;font-size:22px;line-height:22px;letter-spacing:0.111px;color:#000;font-weight:700;width:52.4px;overflow:hidden;transform:scaleX(1.0687);transform-origin:0 0;">EUR</div>
<div style="left:1678px;top:892px;width:148px;height:34px;background:#fff"></div>
<div class="t" style="left:1693.0px;top:900px;font-size:22px;line-height:22px;letter-spacing:0.977px;color:#000;font-weight:700;transform:scaleX(1.2000);transform-origin:0 0;">17,669.71</div>
<div style="left:1828px;top:892px;width:164px;height:34px;background:#fff"></div>
<div class="t" style="left:1832.0px;top:900px;font-size:22px;line-height:22px;letter-spacing:0.143px;color:#000;font-weight:700;width:144.8px;overflow:hidden;transform:scaleX(1.1048);transform-origin:0 0;">NO CONTA.</div>
<div style="left:1994px;top:892px;width:124px;height:34px;background:#fff"></div>
<div class="t" style="left:1998.0px;top:900px;font-size:22px;line-height:22px;letter-spacing:0.124px;color:#000;font-weight:700;width:110.5px;overflow:hidden;transform:scaleX(1.0863);transform-origin:0 0;">PENDIENTE</div>
<div style="left:28px;top:928px;width:116px;height:34px;background:#3d7e7c"></div>
<div class="t" style="left:33.0px;top:936px;font-size:22px;line-height:22px;letter-spacing:2.628px;color:#fff;font-weight:700;width:92.5px;overflow:hidden;transform:scaleX(1.2000);transform-origin:0 0;">25/01/21</div>
<div style="left:146px;top:928px;width:180px;height:34px;background:#fffce6"></div>
<div class="t" style="left:150.0px;top:936px;font-size:22px;line-height:22px;letter-spacing:0.456px;color:#000;font-weight:700;width:146.7px;overflow:hidden;transform:scaleX(1.2000);transform-origin:0 0;">C21M000060</div>
<div style="left:328px;top:928px;width:108px;height:34px;background:#fffce6"></div>
<div class="t" style="left:332.0px;top:936px;font-size:22px;line-height:22px;letter-spacing:0.208px;color:#000;font-weight:700;width:89.3px;overflow:hidden;transform:scaleX(1.1648);transform-origin:0 0;">BIN2AL</div>
<div style="left:438px;top:928px;width:382px;height:34px;background:#fff"></div>
<div class="t" style="left:442.0px;top:936px;font-size:22px;line-height:22px;letter-spacing:0.152px;color:#000;font-weight:700;width:334.1px;overflow:hidden;transform:scaleX(1.1313);transform-origin:0 0;">J. GAMBIN ALICANTE, S.L.</div>
<div style="left:822px;top:928px;width:54px;height:34px;background:#fff"></div>
<div class="t" style="left:826.0px;top:936px;font-size:22px;line-height:22px;letter-spacing:1.268px;color:#000;font-weight:700;width:41.7px;overflow:hidden;transform:scaleX(1.2000);transform-origin:0 0;">SI</div>
<div style="left:878px;top:928px;width:120px;height:34px;background:#fff"></div>
<div class="t" style="left:882.0px;top:936px;font-size:22px;line-height:22px;letter-spacing:2.628px;color:#000;font-weight:700;width:96.7px;overflow:hidden;transform:scaleX(1.2000);transform-origin:0 0;">23/01/21</div>
<div style="left:1000px;top:928px;width:154px;height:34px;background:#fff"></div>
<div class="t" style="left:1004.0px;top:936px;font-size:22px;line-height:22px;letter-spacing:0.646px;color:#000;font-weight:700;width:125.0px;overflow:hidden;transform:scaleX(1.2000);transform-origin:0 0;">PV21-000401</div>
<div style="left:1156px;top:928px;width:162px;height:34px;background:#fff"></div>
<div class="t" style="left:1160.0px;top:936px;font-size:22px;line-height:22px;letter-spacing:0.426px;color:#000;font-weight:700;width:131.7px;overflow:hidden;transform:scaleX(1.2000);transform-origin:0 0;">FVR21-00394</div>
<div style="left:1320px;top:928px;width:134px;height:34px;background:#fff"></div>
<div class="t" style="left:1324.0px;top:936px;font-size:22px;line-height:22px;letter-spacing:2.628px;color:#000;font-weight:700;width:108.3px;overflow:hidden;transform:scaleX(1.2000);transform-origin:0 0;">23/01/21</div>
<div style="left:1456px;top:928px;width:158px;height:34px;background:#ccdcc6"></div>
<div class="t" style="left:1497.0px;top:936px;font-size:22px;line-height:22px;letter-spacing:0.962px;color:#000;font-weight:700;transform:scaleX(1.2000);transform-origin:0 0;">3,441.15</div>
<div style="left:1616px;top:928px;width:60px;height:34px;background:#fffce6"></div>
<div class="t" style="left:1620.0px;top:936px;font-size:22px;line-height:22px;letter-spacing:0.111px;color:#000;font-weight:700;width:52.4px;overflow:hidden;transform:scaleX(1.0687);transform-origin:0 0;">EUR</div>
<div style="left:1678px;top:928px;width:148px;height:34px;background:#fff"></div>
<div class="t" style="left:1709.0px;top:936px;font-size:22px;line-height:22px;letter-spacing:0.962px;color:#000;font-weight:700;transform:scaleX(1.2000);transform-origin:0 0;">3,441.15</div>
<div style="left:1828px;top:928px;width:164px;height:34px;background:#fff"></div>
<div class="t" style="left:1832.0px;top:936px;font-size:22px;line-height:22px;letter-spacing:0.143px;color:#000;font-weight:700;width:144.8px;overflow:hidden;transform:scaleX(1.1048);transform-origin:0 0;">NO CONTA.</div>
<div style="left:1994px;top:928px;width:124px;height:34px;background:#fff"></div>
<div class="t" style="left:1998.0px;top:936px;font-size:22px;line-height:22px;letter-spacing:0.124px;color:#000;font-weight:700;width:110.5px;overflow:hidden;transform:scaleX(1.0863);transform-origin:0 0;">PENDIENTE</div>
<div style="left:28px;top:964px;width:116px;height:34px;background:#3d7e7c"></div>
<div class="t" style="left:33.0px;top:972px;font-size:22px;line-height:22px;letter-spacing:2.628px;color:#fff;font-weight:700;width:92.5px;overflow:hidden;transform:scaleX(1.2000);transform-origin:0 0;">25/01/21</div>
<div style="left:146px;top:964px;width:180px;height:34px;background:#fffce6"></div>
<div class="t" style="left:150.0px;top:972px;font-size:22px;line-height:22px;letter-spacing:0.456px;color:#000;font-weight:700;width:146.7px;overflow:hidden;transform:scaleX(1.2000);transform-origin:0 0;">C21M000059</div>
<div style="left:328px;top:964px;width:108px;height:34px;background:#fffce6"></div>
<div class="t" style="left:332.0px;top:972px;font-size:22px;line-height:22px;letter-spacing:0.208px;color:#000;font-weight:700;width:89.3px;overflow:hidden;transform:scaleX(1.1648);transform-origin:0 0;">BIN2AL</div>
<div style="left:438px;top:964px;width:382px;height:34px;background:#fff"></div>
<div class="t" style="left:442.0px;top:972px;font-size:22px;line-height:22px;letter-spacing:0.152px;color:#000;font-weight:700;width:334.1px;overflow:hidden;transform:scaleX(1.1313);transform-origin:0 0;">J. GAMBIN ALICANTE, S.L.</div>
<div style="left:822px;top:964px;width:54px;height:34px;background:#fff"></div>
<div class="t" style="left:826.0px;top:972px;font-size:22px;line-height:22px;letter-spacing:1.268px;color:#000;font-weight:700;width:41.7px;overflow:hidden;transform:scaleX(1.2000);transform-origin:0 0;">SI</div>
<div style="left:878px;top:964px;width:120px;height:34px;background:#fff"></div>
<div class="t" style="left:882.0px;top:972px;font-size:22px;line-height:22px;letter-spacing:2.628px;color:#000;font-weight:700;width:96.7px;overflow:hidden;transform:scaleX(1.2000);transform-origin:0 0;">23/01/21</div>
<div style="left:1000px;top:964px;width:154px;height:34px;background:#fff"></div>
<div class="t" style="left:1004.0px;top:972px;font-size:22px;line-height:22px;letter-spacing:0.646px;color:#000;font-weight:700;width:125.0px;overflow:hidden;transform:scaleX(1.2000);transform-origin:0 0;">PV21-000431</div>
<div style="left:1156px;top:964px;width:162px;height:34px;background:#fff"></div>
<div class="t" style="left:1160.0px;top:972px;font-size:22px;line-height:22px;letter-spacing:0.426px;color:#000;font-weight:700;width:131.7px;overflow:hidden;transform:scaleX(1.2000);transform-origin:0 0;">FVR21-00366</div>
<div style="left:1320px;top:964px;width:134px;height:34px;background:#fff"></div>
<div class="t" style="left:1324.0px;top:972px;font-size:22px;line-height:22px;letter-spacing:2.628px;color:#000;font-weight:700;width:108.3px;overflow:hidden;transform:scaleX(1.2000);transform-origin:0 0;">23/01/21</div>
<div style="left:1456px;top:964px;width:158px;height:34px;background:#ccdcc6"></div>
<div class="t" style="left:1481.0px;top:972px;font-size:22px;line-height:22px;letter-spacing:0.977px;color:#000;font-weight:700;transform:scaleX(1.2000);transform-origin:0 0;">22,032.19</div>
<div style="left:1616px;top:964px;width:60px;height:34px;background:#fffce6"></div>
<div class="t" style="left:1620.0px;top:972px;font-size:22px;line-height:22px;letter-spacing:0.111px;color:#000;font-weight:700;width:52.4px;overflow:hidden;transform:scaleX(1.0687);transform-origin:0 0;">EUR</div>
<div style="left:1678px;top:964px;width:148px;height:34px;background:#fff"></div>
<div class="t" style="left:1693.0px;top:972px;font-size:22px;line-height:22px;letter-spacing:0.977px;color:#000;font-weight:700;transform:scaleX(1.2000);transform-origin:0 0;">22,032.19</div>
<div style="left:1828px;top:964px;width:164px;height:34px;background:#fff"></div>
<div class="t" style="left:1832.0px;top:972px;font-size:22px;line-height:22px;letter-spacing:0.143px;color:#000;font-weight:700;width:144.8px;overflow:hidden;transform:scaleX(1.1048);transform-origin:0 0;">NO CONTA.</div>
<div style="left:1994px;top:964px;width:124px;height:34px;background:#fff"></div>
<div class="t" style="left:1998.0px;top:972px;font-size:22px;line-height:22px;letter-spacing:0.124px;color:#000;font-weight:700;width:110.5px;overflow:hidden;transform:scaleX(1.0863);transform-origin:0 0;">PENDIENTE</div>
<div style="left:28px;top:1000px;width:116px;height:2px;background:#3d7e7c"></div>
<div style="left:146px;top:1000px;width:180px;height:2px;background:#fffce6"></div>
<div style="left:328px;top:1000px;width:108px;height:2px;background:#fffce6"></div>
<div style="left:438px;top:1000px;width:382px;height:2px;background:#fff"></div>
<div style="left:822px;top:1000px;width:54px;height:2px;background:#fff"></div>
<div style="left:878px;top:1000px;width:120px;height:2px;background:#fff"></div>
<div style="left:1000px;top:1000px;width:154px;height:2px;background:#fff"></div>
<div style="left:1156px;top:1000px;width:162px;height:2px;background:#fff"></div>
<div style="left:1320px;top:1000px;width:134px;height:2px;background:#fff"></div>
<div style="left:1456px;top:1000px;width:158px;height:2px;background:#ccdcc6"></div>
<div style="left:1616px;top:1000px;width:60px;height:2px;background:#fffce6"></div>
<div style="left:1678px;top:1000px;width:148px;height:2px;background:#fff"></div>
<div style="left:1828px;top:1000px;width:164px;height:2px;background:#fff"></div>
<div style="left:1994px;top:1000px;width:124px;height:2px;background:#fff"></div>
<svg style="left:232px;top:204px" width="36" height="30" viewBox="0 0 36 30"><g fill="none" stroke="#000" stroke-width="2.3"><circle cx="9.5" cy="19.5" r="6"/><circle cx="26.5" cy="19.5" r="6"/><rect x="15" y="17" width="6" height="4"/><path d="M4 18 Q4 9 8 5 Q10 3 12 4.5 Q14 6 18 6 Q22 6 24 4.5 Q26 3 28 5 Q32 9 32 18"/></g></svg>
<svg style="left:280px;top:204px" width="26" height="26" viewBox="0 0 26 26"><rect x="0" y="0" width="26" height="26" rx="4" fill="#000"/><rect x="2.5" y="2.5" width="6" height="6" fill="#f0f0f0"/><rect x="2.5" y="10.0" width="6" height="6" fill="#f0f0f0"/><rect x="2.5" y="17.5" width="6" height="6" fill="#f0f0f0"/><rect x="10.0" y="2.5" width="6" height="6" fill="#f0f0f0"/><rect x="10.0" y="10.0" width="6" height="6" fill="#f0f0f0"/><rect x="10.0" y="17.5" width="6" height="6" fill="#f0f0f0"/><rect x="17.5" y="2.5" width="6" height="6" fill="#f0f0f0"/><rect x="17.5" y="10.0" width="6" height="6" fill="#f0f0f0"/><rect x="17.5" y="17.5" width="6" height="6" fill="#f0f0f0"/></svg>
<svg style="left:1162px;top:204px" width="26" height="26" viewBox="0 0 26 26"><rect x="0" y="0" width="26" height="26" rx="4" fill="#000"/><rect x="2.5" y="2.5" width="6" height="6" fill="#f7f250"/><rect x="2.5" y="10.0" width="6" height="6" fill="#f7f250"/><rect x="2.5" y="17.5" width="6" height="6" fill="#f7f250"/><rect x="10.0" y="2.5" width="6" height="6" fill="#f7f250"/><rect x="10.0" y="10.0" width="6" height="6" fill="#f7f250"/><rect x="10.0" y="17.5" width="6" height="6" fill="#f7f250"/><rect x="17.5" y="2.5" width="6" height="6" fill="#f7f250"/><rect x="17.5" y="10.0" width="6" height="6" fill="#f7f250"/><rect x="17.5" y="17.5" width="6" height="6" fill="#f7f250"/></svg>
<svg style="left:1386px;top:204px" width="26" height="26" viewBox="0 0 26 26"><rect x="0" y="0" width="26" height="26" rx="4" fill="#000"/><rect x="2.5" y="2.5" width="6" height="6" fill="#3f9a2e"/><rect x="2.5" y="10.0" width="6" height="6" fill="#3f9a2e"/><rect x="2.5" y="17.5" width="6" height="6" fill="#3f9a2e"/><rect x="10.0" y="2.5" width="6" height="6" fill="#3f9a2e"/><rect x="10.0" y="10.0" width="6" height="6" fill="#3f9a2e"/><rect x="10.0" y="17.5" width="6" height="6" fill="#3f9a2e"/><rect x="17.5" y="2.5" width="6" height="6" fill="#3f9a2e"/><rect x="17.5" y="10.0" width="6" height="6" fill="#3f9a2e"/><rect x="17.5" y="17.5" width="6" height="6" fill="#3f9a2e"/></svg>
<svg style="left:1594px;top:204px" width="26" height="26" viewBox="0 0 26 26"><rect x="0" y="0" width="26" height="26" rx="4" fill="#000"/><rect x="2.5" y="2.5" width="6" height="6" fill="#43dc36"/><rect x="2.5" y="10.0" width="6" height="6" fill="#43dc36"/><rect x="2.5" y="17.5" width="6" height="6" fill="#43dc36"/><rect x="10.0" y="2.5" width="6" height="6" fill="#43dc36"/><rect x="10.0" y="10.0" width="6" height="6" fill="#43dc36"/><rect x="10.0" y="17.5" width="6" height="6" fill="#43dc36"/><rect x="17.5" y="2.5" width="6" height="6" fill="#43dc36"/><rect x="17.5" y="10.0" width="6" height="6" fill="#43dc36"/><rect x="17.5" y="17.5" width="6" height="6" fill="#43dc36"/></svg>
<svg style="left:436px;top:196px" width="42" height="40" viewBox="0 0 42 40"><polygon points="8.5,3.7 12.5,4.6 22.6,14.2 27.9,14.2 27.9,17.8 20.8,25.7 9,14.2" fill="#f0f0f0"/><polygon points="10,21 11.5,21 19,31.5 35.3,18.2 35.8,23.5 32,28 38,40 9,40 8.5,28" fill="#f0f0f0"/><rect x="0.5" y="29" width="6.5" height="11" fill="#f0f0f0"/><rect x="0" y="37.5" width="32" height="2.5" fill="#9a9a9a"/><path d="M28.3 14.2 L39.7 2.8 M9 2.4 L12 0.6" stroke="#f5d8f5" stroke-width="1.4" stroke-dasharray="1.6 1.2"/><path d="M11 33 H14 M19 38.8 L31.4 30.9 M28.7 39.3 L33 35.3 M8 39 H11" stroke="#000" stroke-width="1.8" stroke-dasharray="2.2 1.4"/></svg>
<svg style="left:1819px;top:202px" width="26" height="31" viewBox="0 0 26 31"><rect x="2" y="2" width="22" height="27" fill="#fff" stroke="#6e6e6e" stroke-width="2.2"/><path d="M7 8 H17" stroke="#707070" stroke-width="2"/><rect x="7" y="12.5" width="11" height="8" fill="none" stroke="#b0b0b0" stroke-width="1.6"/><path d="M12.5 12.5 V20.5 M7 16.5 H18" stroke="#b0b0b0" stroke-width="1.2"/><path d="M13 24.5 H18" stroke="#707070" stroke-width="2"/></svg>
<svg style="left:48px;top:376px" width="25" height="32" viewBox="0 0 25 32"><rect x="1" y="1" width="23" height="30" fill="#dcdcdc" stroke="#c8c8c8" stroke-width="1.5"/><rect x="4" y="7" width="16" height="16" fill="#8b1414"/><rect x="4" y="5" width="16" height="1.6" fill="#8b1414"/><rect x="10" y="11" width="5" height="5" fill="#e8d0d0"/><rect x="8" y="18" width="8" height="1.6" fill="#e8d0d0"/><rect x="13" y="25" width="9" height="2.4" fill="#8b1414"/><rect x="4" y="23" width="4" height="1.6" fill="#300"/></svg>
<svg style="left:99px;top:379px" width="30" height="27" viewBox="0 0 30 27"><g fill="none" stroke="#000" stroke-width="2.4"><path d="M6.5 9 V3 M22.5 9 V3"/><path d="M7 21 H4 Q2 21 2 19 V12 Q2 9 5 9 H24 Q27 9 27 12 V19 Q27 21 25 21 H22"/><rect x="7" y="16" width="15" height="9"/></g><path d="M11 2 H18 L14.5 5 Z" fill="#000"/></svg>
<svg style="left:1972px;top:380px" width="36" height="32" viewBox="0 0 36 32"><path d="M9 26 L25 10 Q28 7 31 10 Q34 13 31 16 L16 31 Q11 35 7 31 Q3 27 7 22 L21 8" fill="none" stroke="#8c8c8c" stroke-width="2.2" transform="translate(0,-3)"/></svg>
<svg style="left:2044px;top:381px" width="30" height="29" viewBox="0 0 30 29"><path d="M4 3 H10 L15 7 L20 3 H26 Q28 3 28 5 V24 Q28 27 25 27 H5 Q2 27 2 24 V5 Q2 3 4 3 Z" fill="none" stroke="#000" stroke-width="2.4"/><path d="M15 11 V21" stroke="#000" stroke-width="2"/><path d="M10 18 L15 23 L20 18 Z" fill="#000"/></svg>
<svg style="left:2089px;top:383px" width="36" height="27" viewBox="0 0 36 27"><g fill="none" stroke="#707070" stroke-width="1.6"><rect x="2" y="2" width="6" height="5"/><rect x="2" y="11" width="6" height="5"/><rect x="2" y="20" width="6" height="5"/></g><path d="M8 4.5 H33 M8 22.5 H33" stroke="#7a7a7a" stroke-width="1.8"/><path d="M8 13.5 H33" stroke="#b4b4b4" stroke-width="3"/></svg>
<div style="left:1364px;top:318px;width:130px;height:82px;background:#fff;border:2px solid #6a6a6a;box-sizing:border-box"></div>
<div style="left:1366px;top:372px;width:126px;height:26px;background:#5697f0;outline:1px dotted #8a6a40;outline-offset:-1px"></div>
<div class="t" style="left:1371.0px;top:324px;font-size:22px;line-height:22px;letter-spacing:1.209px;color:#000;transform:scaleX(1.1200);transform-origin:0 0;">SI</div>
<div class="t" style="left:1371.0px;top:350px;font-size:22px;line-height:22px;letter-spacing:0.196px;color:#000;transform:scaleX(1.0182);transform-origin:0 0;">NO</div>
<svg style="left:1372px;top:376px" width="12" height="12" viewBox="0 0 12 12"><path d="M6 0.8 V10.8" stroke="#fff" stroke-width="1.6" opacity="0.6"/><path d="M1.8 3.6 L6 5.8 L10.2 3.6 M1.8 7.8 L6 5.8 L10.2 7.8" fill="none" stroke="#fff" stroke-width="2.1" stroke-linecap="round"/></svg>
</body></html>
